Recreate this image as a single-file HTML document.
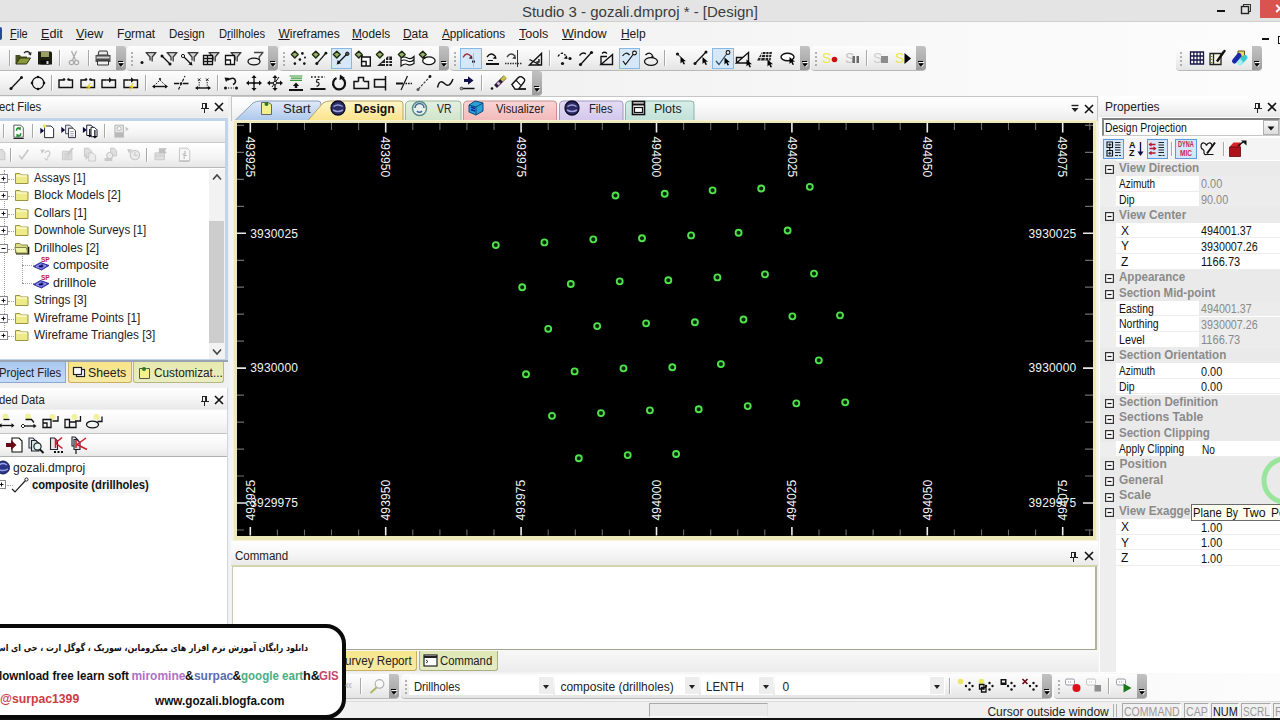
<!DOCTYPE html>
<html><head><meta charset="utf-8"><title>Studio 3 - gozali.dmproj * - [Design]</title>
<style>
html,body{margin:0;padding:0;}
body{width:1280px;height:720px;overflow:hidden;position:relative;background:#f3f3f3;font-family:"Liberation Sans","DejaVu Sans",sans-serif;}
.t{position:absolute;white-space:nowrap;transform-origin:0 50%;}
u{text-decoration:underline;text-underline-offset:1px;}
#blur{position:absolute;left:0;top:0;width:1280px;height:720px;overflow:hidden;}
</style></head><body><div id="blur">
<div style="position:absolute;left:0px;top:0px;width:1280px;height:21px;background:#e4e4e4;"></div>
<div style="position:absolute;left:0px;top:21px;width:1280px;height:1px;background:#d0d0d0;"></div>
<div style="position:absolute;left:0px;top:22px;width:1280px;height:74px;background:linear-gradient(90deg,#ebebeb 0%,#f1f1f1 40%,#f9f9f9 75%,#fcfcfc 100%);"></div>
<span class="t" style="left:521.9px;top:2.2px;font-size:15px;line-height:19px;color:#3c3c3c;">Studio 3 - gozali.dmproj * - [Design]</span>
<div style="position:absolute;left:1260px;top:0px;width:20px;height:18px;background:#d9534f;"></div>
<div style="position:absolute;left:1217px;top:10px;width:8px;height:2px;background:#111;"></div>
<svg style="position:absolute;left:1240px;top:3px;" width="12" height="12" viewBox="0 0 12 12"><rect x="3.5" y="1.5" width="7" height="7" fill="none" stroke="#333" stroke-width="1"/><rect x="1.5" y="3.5" width="7" height="7" fill="#e4e4e4" stroke="#222" stroke-width="1.4"/></svg>
<span class="t" style="left:1275.0px;top:-0.8px;font-size:16px;line-height:20px;color:#fff;font-weight:bold;">×</span>
<div style="position:absolute;left:1262px;top:38px;width:7px;height:2px;background:#111;"></div>
<div style="position:absolute;left:1278px;top:36px;width:4px;height:6px;border:1.5px solid #111;"></div>
<span class="t" style="left:9.9px;top:25.7px;font-size:12px;line-height:16px;color:#1a1a1a;transform:scaleX(0.915);"><u>F</u>ile</span>
<span class="t" style="left:40.9px;top:25.7px;font-size:12px;line-height:16px;color:#1a1a1a;transform:scaleX(1.050);"><u>E</u>dit</span>
<span class="t" style="left:76.4px;top:25.7px;font-size:12px;line-height:16px;color:#1a1a1a;transform:scaleX(1.054);"><u>V</u>iew</span>
<span class="t" style="left:117.4px;top:25.7px;font-size:12px;line-height:16px;color:#1a1a1a;transform:scaleX(1.005);">F<u>o</u>rmat</span>
<span class="t" style="left:169.4px;top:25.7px;font-size:12px;line-height:16px;color:#1a1a1a;transform:scaleX(0.956);">De<u>s</u>ign</span>
<span class="t" style="left:218.9px;top:25.7px;font-size:12px;line-height:16px;color:#1a1a1a;transform:scaleX(0.936);">D<u>r</u>illholes</span>
<span class="t" style="left:278.4px;top:25.7px;font-size:12px;line-height:16px;color:#1a1a1a;"><u>W</u>ireframes</span>
<span class="t" style="left:352.4px;top:25.7px;font-size:12px;line-height:16px;color:#1a1a1a;transform:scaleX(0.987);"><u>M</u>odels</span>
<span class="t" style="left:403.4px;top:25.7px;font-size:12px;line-height:16px;color:#1a1a1a;transform:scaleX(0.994);"><u>D</u>ata</span>
<span class="t" style="left:442.4px;top:25.7px;font-size:12px;line-height:16px;color:#1a1a1a;transform:scaleX(0.977);"><u>A</u>pplications</span>
<span class="t" style="left:519.4px;top:25.7px;font-size:12px;line-height:16px;color:#1a1a1a;transform:scaleX(1.042);"><u>T</u>ools</span>
<span class="t" style="left:562.4px;top:25.7px;font-size:12px;line-height:16px;color:#1a1a1a;transform:scaleX(1.047);"><u>W</u>indow</span>
<span class="t" style="left:620.9px;top:25.7px;font-size:12px;line-height:16px;color:#1a1a1a;"><u>H</u>elp</span>
<div style="position:absolute;left:0px;top:27px;width:2px;height:13px;background:#2a4a98;border-radius:0 5px 5px 0;"></div>
<div style="position:absolute;left:-4px;top:46px;width:130px;height:24px;background:linear-gradient(180deg,#fdfdfd 0%,#f4f4f4 45%,#e4e4e4 100%);border-radius:4px;box-shadow:0 1px 0 #b8b8b8;"></div>
<div style="position:absolute;left:116px;top:46px;width:10px;height:24px;background:linear-gradient(180deg,#c2c2c2 0%,#b0b0b0 50%,#9c9c9c 100%);border-radius:0 3px 3px 0;"></div>
<div style="position:absolute;left:118px;top:61px;width:5px;height:1px;background:#000;box-shadow:1px 1px 0 #fff;"></div>
<svg style="position:absolute;left:117px;top:63px;" width="8" height="5" viewBox="0 0 8 5"><path d="M1.5 0.5 L6.5 0.5 L4 3.5 Z" fill="#000"/><path d="M2.5 1.5 L7.5 1.5 L5 4.5 Z" fill="#fff" opacity="0.6"/><path d="M1.5 0.5 L6.5 0.5 L4 3.5 Z" fill="#000"/></svg>
<div style="position:absolute;left:9px;top:50px;width:1px;height:16px;background:#a8a8a8;box-shadow:1px 0 0 #fff;"></div>
<div style="position:absolute;left:59px;top:50px;width:1px;height:16px;background:#a8a8a8;box-shadow:1px 0 0 #fff;"></div>
<div style="position:absolute;left:88px;top:50px;width:1px;height:16px;background:#a8a8a8;box-shadow:1px 0 0 #fff;"></div>
<div style="position:absolute;left:127px;top:46px;width:151px;height:24px;background:linear-gradient(180deg,#fdfdfd 0%,#f4f4f4 45%,#e4e4e4 100%);border-radius:4px;box-shadow:0 1px 0 #b8b8b8;"></div>
<div style="position:absolute;left:268px;top:46px;width:10px;height:24px;background:linear-gradient(180deg,#c2c2c2 0%,#b0b0b0 50%,#9c9c9c 100%);border-radius:0 3px 3px 0;"></div>
<div style="position:absolute;left:270px;top:61px;width:5px;height:1px;background:#000;box-shadow:1px 1px 0 #fff;"></div>
<svg style="position:absolute;left:269px;top:63px;" width="8" height="5" viewBox="0 0 8 5"><path d="M1.5 0.5 L6.5 0.5 L4 3.5 Z" fill="#000"/><path d="M2.5 1.5 L7.5 1.5 L5 4.5 Z" fill="#fff" opacity="0.6"/><path d="M1.5 0.5 L6.5 0.5 L4 3.5 Z" fill="#000"/></svg>
<div style="position:absolute;left:131px;top:52px;width:2px;height:2px;background:#9a9a9a;border-radius:1px;"></div>
<div style="position:absolute;left:131px;top:56px;width:2px;height:2px;background:#9a9a9a;border-radius:1px;"></div>
<div style="position:absolute;left:131px;top:60px;width:2px;height:2px;background:#9a9a9a;border-radius:1px;"></div>
<div style="position:absolute;left:131px;top:64px;width:2px;height:2px;background:#9a9a9a;border-radius:1px;"></div>
<div style="position:absolute;left:279px;top:46px;width:170px;height:24px;background:linear-gradient(180deg,#fdfdfd 0%,#f4f4f4 45%,#e4e4e4 100%);border-radius:4px;box-shadow:0 1px 0 #b8b8b8;"></div>
<div style="position:absolute;left:439px;top:46px;width:10px;height:24px;background:linear-gradient(180deg,#c2c2c2 0%,#b0b0b0 50%,#9c9c9c 100%);border-radius:0 3px 3px 0;"></div>
<div style="position:absolute;left:441px;top:61px;width:5px;height:1px;background:#000;box-shadow:1px 1px 0 #fff;"></div>
<svg style="position:absolute;left:440px;top:63px;" width="8" height="5" viewBox="0 0 8 5"><path d="M1.5 0.5 L6.5 0.5 L4 3.5 Z" fill="#000"/><path d="M2.5 1.5 L7.5 1.5 L5 4.5 Z" fill="#fff" opacity="0.6"/><path d="M1.5 0.5 L6.5 0.5 L4 3.5 Z" fill="#000"/></svg>
<div style="position:absolute;left:283px;top:52px;width:2px;height:2px;background:#9a9a9a;border-radius:1px;"></div>
<div style="position:absolute;left:283px;top:56px;width:2px;height:2px;background:#9a9a9a;border-radius:1px;"></div>
<div style="position:absolute;left:283px;top:60px;width:2px;height:2px;background:#9a9a9a;border-radius:1px;"></div>
<div style="position:absolute;left:283px;top:64px;width:2px;height:2px;background:#9a9a9a;border-radius:1px;"></div>
<div style="position:absolute;left:331px;top:48px;width:19px;height:18.5px;background:#d6e8f8;border:1px solid #86b8e6;"></div>
<div style="position:absolute;left:450px;top:46px;width:360px;height:24px;background:linear-gradient(180deg,#fdfdfd 0%,#f4f4f4 45%,#e4e4e4 100%);border-radius:4px;box-shadow:0 1px 0 #b8b8b8;"></div>
<div style="position:absolute;left:800px;top:46px;width:10px;height:24px;background:linear-gradient(180deg,#c2c2c2 0%,#b0b0b0 50%,#9c9c9c 100%);border-radius:0 3px 3px 0;"></div>
<div style="position:absolute;left:802px;top:61px;width:5px;height:1px;background:#000;box-shadow:1px 1px 0 #fff;"></div>
<svg style="position:absolute;left:801px;top:63px;" width="8" height="5" viewBox="0 0 8 5"><path d="M1.5 0.5 L6.5 0.5 L4 3.5 Z" fill="#000"/><path d="M2.5 1.5 L7.5 1.5 L5 4.5 Z" fill="#fff" opacity="0.6"/><path d="M1.5 0.5 L6.5 0.5 L4 3.5 Z" fill="#000"/></svg>
<div style="position:absolute;left:454px;top:52px;width:2px;height:2px;background:#9a9a9a;border-radius:1px;"></div>
<div style="position:absolute;left:454px;top:56px;width:2px;height:2px;background:#9a9a9a;border-radius:1px;"></div>
<div style="position:absolute;left:454px;top:60px;width:2px;height:2px;background:#9a9a9a;border-radius:1px;"></div>
<div style="position:absolute;left:454px;top:64px;width:2px;height:2px;background:#9a9a9a;border-radius:1px;"></div>
<div style="position:absolute;left:460px;top:48px;width:19.5px;height:18.5px;background:#d6e8f8;border:1px solid #86b8e6;"></div>
<div style="position:absolute;left:549px;top:50px;width:1px;height:16px;background:#a8a8a8;box-shadow:1px 0 0 #fff;"></div>
<div style="position:absolute;left:664px;top:50px;width:1px;height:16px;background:#a8a8a8;box-shadow:1px 0 0 #fff;"></div>
<div style="position:absolute;left:618.5px;top:48px;width:19.0px;height:18.5px;background:#d6e8f8;border:1px solid #86b8e6;"></div>
<div style="position:absolute;left:712px;top:48px;width:19.5px;height:18.5px;background:#d6e8f8;border:1px solid #86b8e6;"></div>
<div style="position:absolute;left:811px;top:46px;width:115px;height:24px;background:linear-gradient(180deg,#fdfdfd 0%,#f4f4f4 45%,#e4e4e4 100%);border-radius:4px;box-shadow:0 1px 0 #b8b8b8;"></div>
<div style="position:absolute;left:916px;top:46px;width:10px;height:24px;background:linear-gradient(180deg,#c2c2c2 0%,#b0b0b0 50%,#9c9c9c 100%);border-radius:0 3px 3px 0;"></div>
<div style="position:absolute;left:918px;top:61px;width:5px;height:1px;background:#000;box-shadow:1px 1px 0 #fff;"></div>
<svg style="position:absolute;left:917px;top:63px;" width="8" height="5" viewBox="0 0 8 5"><path d="M1.5 0.5 L6.5 0.5 L4 3.5 Z" fill="#000"/><path d="M2.5 1.5 L7.5 1.5 L5 4.5 Z" fill="#fff" opacity="0.6"/><path d="M1.5 0.5 L6.5 0.5 L4 3.5 Z" fill="#000"/></svg>
<div style="position:absolute;left:815px;top:52px;width:2px;height:2px;background:#9a9a9a;border-radius:1px;"></div>
<div style="position:absolute;left:815px;top:56px;width:2px;height:2px;background:#9a9a9a;border-radius:1px;"></div>
<div style="position:absolute;left:815px;top:60px;width:2px;height:2px;background:#9a9a9a;border-radius:1px;"></div>
<div style="position:absolute;left:815px;top:64px;width:2px;height:2px;background:#9a9a9a;border-radius:1px;"></div>
<div style="position:absolute;left:866px;top:50px;width:1px;height:16px;background:#a8a8a8;box-shadow:1px 0 0 #fff;"></div>
<div style="position:absolute;left:1176px;top:46px;width:86px;height:24px;background:linear-gradient(180deg,#fdfdfd 0%,#f4f4f4 45%,#e4e4e4 100%);border-radius:4px;box-shadow:0 1px 0 #b8b8b8;"></div>
<div style="position:absolute;left:1252px;top:46px;width:10px;height:24px;background:linear-gradient(180deg,#c2c2c2 0%,#b0b0b0 50%,#9c9c9c 100%);border-radius:0 3px 3px 0;"></div>
<div style="position:absolute;left:1254px;top:61px;width:5px;height:1px;background:#000;box-shadow:1px 1px 0 #fff;"></div>
<svg style="position:absolute;left:1253px;top:63px;" width="8" height="5" viewBox="0 0 8 5"><path d="M1.5 0.5 L6.5 0.5 L4 3.5 Z" fill="#000"/><path d="M2.5 1.5 L7.5 1.5 L5 4.5 Z" fill="#fff" opacity="0.6"/><path d="M1.5 0.5 L6.5 0.5 L4 3.5 Z" fill="#000"/></svg>
<div style="position:absolute;left:1180px;top:52px;width:2px;height:2px;background:#9a9a9a;border-radius:1px;"></div>
<div style="position:absolute;left:1180px;top:56px;width:2px;height:2px;background:#9a9a9a;border-radius:1px;"></div>
<div style="position:absolute;left:1180px;top:60px;width:2px;height:2px;background:#9a9a9a;border-radius:1px;"></div>
<div style="position:absolute;left:1180px;top:64px;width:2px;height:2px;background:#9a9a9a;border-radius:1px;"></div>
<div style="position:absolute;left:-4px;top:71px;width:546px;height:24px;background:linear-gradient(180deg,#fdfdfd 0%,#f4f4f4 45%,#e4e4e4 100%);border-radius:4px;box-shadow:0 1px 0 #b8b8b8;"></div>
<div style="position:absolute;left:532px;top:71px;width:10px;height:24px;background:linear-gradient(180deg,#c2c2c2 0%,#b0b0b0 50%,#9c9c9c 100%);border-radius:0 3px 3px 0;"></div>
<div style="position:absolute;left:534px;top:86px;width:5px;height:1px;background:#000;box-shadow:1px 1px 0 #fff;"></div>
<svg style="position:absolute;left:533px;top:88px;" width="8" height="5" viewBox="0 0 8 5"><path d="M1.5 0.5 L6.5 0.5 L4 3.5 Z" fill="#000"/><path d="M2.5 1.5 L7.5 1.5 L5 4.5 Z" fill="#fff" opacity="0.6"/><path d="M1.5 0.5 L6.5 0.5 L4 3.5 Z" fill="#000"/></svg>
<div style="position:absolute;left:51px;top:75px;width:1px;height:16px;background:#a8a8a8;box-shadow:1px 0 0 #fff;"></div>
<div style="position:absolute;left:145px;top:75px;width:1px;height:16px;background:#a8a8a8;box-shadow:1px 0 0 #fff;"></div>
<div style="position:absolute;left:217px;top:75px;width:1px;height:16px;background:#a8a8a8;box-shadow:1px 0 0 #fff;"></div>
<div style="position:absolute;left:481px;top:75px;width:1px;height:16px;background:#a8a8a8;box-shadow:1px 0 0 #fff;"></div>
<div style="position:absolute;left:0px;top:96px;width:229px;height:560px;background:#f0f0f0;"></div>
<div style="position:absolute;left:0px;top:97px;width:228px;height:20px;background:linear-gradient(180deg,#ffffff 0%,#f6f6f6 50%,#e9e9e9 100%);"></div>
<span class="t" style="left:-0.6px;top:99.2px;font-size:12px;line-height:16px;color:#222;transform:scaleX(0.945);">ect Files</span>
<svg style="position:absolute;left:200px;top:102px;" width="10" height="11" viewBox="0 0 10 11"><path d="M2 1.5 h5 M2.5 1 v5 M5.5 1 v5 M6.5 1 v5 M0.5 6.5 h8 M4.5 7 v3.5" stroke="#222" stroke-width="1" fill="none" shape-rendering="crispEdges"/></svg>
<svg style="position:absolute;left:214px;top:102px;" width="10" height="10" viewBox="0 0 10 10"><path d="M1 1 L9 9 M9 1 L1 9" stroke="#111" stroke-width="1.6" fill="none"/></svg>
<div style="position:absolute;left:0px;top:118px;width:228px;height:242px;background:#fff;border:1px solid #c2d4ea;border-left:none;border-width:3px 3px 1px 0;box-sizing:border-box;"></div>
<div style="position:absolute;left:0px;top:121px;width:225px;height:21px;background:linear-gradient(180deg,#ffffff,#f4f4f4 60%,#e6e6e6);"></div>
<div style="position:absolute;left:0px;top:142px;width:225px;height:1px;background:#c8c8c8;"></div>
<div style="position:absolute;left:0px;top:144px;width:225px;height:23px;background:linear-gradient(180deg,#ffffff,#f4f4f4 60%,#e6e6e6);"></div>
<div style="position:absolute;left:0px;top:167px;width:225px;height:1px;background:#b8b8b8;"></div>
<div style="position:absolute;left:3px;top:124px;width:1px;height:14px;background:#a8a8a8;box-shadow:1px 0 0 #fff;"></div>
<div style="position:absolute;left:32px;top:124px;width:1px;height:14px;background:#a8a8a8;box-shadow:1px 0 0 #fff;"></div>
<div style="position:absolute;left:104px;top:124px;width:1px;height:14px;background:#a8a8a8;box-shadow:1px 0 0 #fff;"></div>
<div style="position:absolute;left:10px;top:148px;width:1px;height:14px;background:#a8a8a8;box-shadow:1px 0 0 #fff;"></div>
<div style="position:absolute;left:146px;top:148px;width:1px;height:14px;background:#a8a8a8;box-shadow:1px 0 0 #fff;"></div>
<div style="position:absolute;left:4px;top:170px;width:0px;height:170px;border-left:1px dotted #a0a0a0;"></div>
<div style="position:absolute;left:22px;top:256px;width:0px;height:27px;border-left:1px dotted #a0a0a0;"></div>
<div style="position:absolute;left:8px;top:178.5px;width:8px;height:0px;border-top:1px dotted #a0a0a0;"></div>
<svg style="position:absolute;left:-1px;top:173.5px;" width="9" height="9" viewBox="0 0 9 9"><rect x="0.5" y="0.5" width="8" height="8" fill="#fff" stroke="#8a8a8a"/><path d="M2.5 4.5 h4 M4.5 2.5 v4" stroke="#111" stroke-width="1"/></svg>
<svg style="position:absolute;left:14px;top:170.5px;" width="16" height="14" viewBox="0 0 16 14"><path d="M1.5 2.5 h4.5 l1.5 1.5 h6.5 v8.5 h-12.5 z" fill="#eeea88" stroke="#9a9648" stroke-width="1"/><path d="M2.5 5 h10.5" stroke="#fbf9c8" stroke-width="1.5"/></svg>
<span class="t" style="left:34.4px;top:169.7px;font-size:12px;line-height:16px;color:#222;transform:scaleX(0.934);">Assays [1]</span>
<div style="position:absolute;left:8px;top:196px;width:8px;height:0px;border-top:1px dotted #a0a0a0;"></div>
<svg style="position:absolute;left:-1px;top:191px;" width="9" height="9" viewBox="0 0 9 9"><rect x="0.5" y="0.5" width="8" height="8" fill="#fff" stroke="#8a8a8a"/><path d="M2.5 4.5 h4 M4.5 2.5 v4" stroke="#111" stroke-width="1"/></svg>
<svg style="position:absolute;left:14px;top:188px;" width="16" height="14" viewBox="0 0 16 14"><path d="M1.5 2.5 h4.5 l1.5 1.5 h6.5 v8.5 h-12.5 z" fill="#eeea88" stroke="#9a9648" stroke-width="1"/><path d="M2.5 5 h10.5" stroke="#fbf9c8" stroke-width="1.5"/></svg>
<span class="t" style="left:34.4px;top:187.2px;font-size:12px;line-height:16px;color:#222;transform:scaleX(0.985);">Block Models [2]</span>
<div style="position:absolute;left:8px;top:213.5px;width:8px;height:0px;border-top:1px dotted #a0a0a0;"></div>
<svg style="position:absolute;left:-1px;top:208.5px;" width="9" height="9" viewBox="0 0 9 9"><rect x="0.5" y="0.5" width="8" height="8" fill="#fff" stroke="#8a8a8a"/><path d="M2.5 4.5 h4 M4.5 2.5 v4" stroke="#111" stroke-width="1"/></svg>
<svg style="position:absolute;left:14px;top:205.5px;" width="16" height="14" viewBox="0 0 16 14"><path d="M1.5 2.5 h4.5 l1.5 1.5 h6.5 v8.5 h-12.5 z" fill="#eeea88" stroke="#9a9648" stroke-width="1"/><path d="M2.5 5 h10.5" stroke="#fbf9c8" stroke-width="1.5"/></svg>
<span class="t" style="left:34.4px;top:204.7px;font-size:12px;line-height:16px;color:#222;transform:scaleX(0.976);">Collars [1]</span>
<div style="position:absolute;left:8px;top:231px;width:8px;height:0px;border-top:1px dotted #a0a0a0;"></div>
<svg style="position:absolute;left:-1px;top:226px;" width="9" height="9" viewBox="0 0 9 9"><rect x="0.5" y="0.5" width="8" height="8" fill="#fff" stroke="#8a8a8a"/><path d="M2.5 4.5 h4 M4.5 2.5 v4" stroke="#111" stroke-width="1"/></svg>
<svg style="position:absolute;left:14px;top:223px;" width="16" height="14" viewBox="0 0 16 14"><path d="M1.5 2.5 h4.5 l1.5 1.5 h6.5 v8.5 h-12.5 z" fill="#eeea88" stroke="#9a9648" stroke-width="1"/><path d="M2.5 5 h10.5" stroke="#fbf9c8" stroke-width="1.5"/></svg>
<span class="t" style="left:34.4px;top:222.2px;font-size:12px;line-height:16px;color:#222;transform:scaleX(0.961);">Downhole Surveys [1]</span>
<div style="position:absolute;left:8px;top:248.5px;width:8px;height:0px;border-top:1px dotted #a0a0a0;"></div>
<svg style="position:absolute;left:-1px;top:243.5px;" width="9" height="9" viewBox="0 0 9 9"><rect x="0.5" y="0.5" width="8" height="8" fill="#fff" stroke="#8a8a8a"/><path d="M2.5 4.5 h4" stroke="#111" stroke-width="1"/></svg>
<svg style="position:absolute;left:14px;top:240.5px;" width="17" height="14" viewBox="0 0 17 14"><path d="M2 12.8 h12.5 v-7" stroke="#1a1a10" stroke-width="1.6" fill="none"/><path d="M1.5 2.5 h4.5 l1.5 1.5 h6 v8 h-12 z" fill="#dcdc84" stroke="#8a8a48" stroke-width="1"/><path d="M0.8 6.5 h11.5 l1.5 5.5 h-11.5 z" fill="#eef2a4" stroke="#7a7a40" stroke-width="0.9"/></svg>
<span class="t" style="left:34.4px;top:239.7px;font-size:12px;line-height:16px;color:#222;transform:scaleX(0.987);">Drillholes [2]</span>
<div style="position:absolute;left:22px;top:265px;width:12px;height:0px;border-top:1px dotted #a0a0a0;"></div>
<svg style="position:absolute;left:33px;top:257px;" width="17" height="15" viewBox="0 0 17 15"><path d="M0.5 9.5 L7.5 5.5 L16 8.5 L8.5 13 Z" fill="#4a4ad0" stroke="#24248a" stroke-width="0.9"/><path d="M3 9.6 L7.8 7 L13 8.8 L8.3 11.4 Z" fill="none" stroke="#b4b4f4" stroke-width="0.8"/><path d="M6 9.5 h3 v-2" stroke="#0c0c50" stroke-width="1.4" fill="none"/><text x="8" y="5.2" font-family="Liberation Sans,sans-serif" font-size="6.5" font-weight="bold" fill="#c01830">SP</text></svg>
<span class="t" style="left:52.9px;top:257.2px;font-size:12px;line-height:16px;color:#222;transform:scaleX(1.019);">composite</span>
<div style="position:absolute;left:22px;top:282.5px;width:12px;height:0px;border-top:1px dotted #a0a0a0;"></div>
<svg style="position:absolute;left:33px;top:274.5px;" width="17" height="15" viewBox="0 0 17 15"><path d="M0.5 9.5 L7.5 5.5 L16 8.5 L8.5 13 Z" fill="#4a4ad0" stroke="#24248a" stroke-width="0.9"/><path d="M3 9.6 L7.8 7 L13 8.8 L8.3 11.4 Z" fill="none" stroke="#b4b4f4" stroke-width="0.8"/><path d="M6 9.5 h3 v-2" stroke="#0c0c50" stroke-width="1.4" fill="none"/><text x="8" y="5.2" font-family="Liberation Sans,sans-serif" font-size="6.5" font-weight="bold" fill="#c01830">SP</text></svg>
<span class="t" style="left:52.9px;top:274.7px;font-size:12px;line-height:16px;color:#222;transform:scaleX(1.044);">drillhole</span>
<div style="position:absolute;left:8px;top:301px;width:8px;height:0px;border-top:1px dotted #a0a0a0;"></div>
<svg style="position:absolute;left:-1px;top:296px;" width="9" height="9" viewBox="0 0 9 9"><rect x="0.5" y="0.5" width="8" height="8" fill="#fff" stroke="#8a8a8a"/><path d="M2.5 4.5 h4 M4.5 2.5 v4" stroke="#111" stroke-width="1"/></svg>
<svg style="position:absolute;left:14px;top:293px;" width="16" height="14" viewBox="0 0 16 14"><path d="M1.5 2.5 h4.5 l1.5 1.5 h6.5 v8.5 h-12.5 z" fill="#eeea88" stroke="#9a9648" stroke-width="1"/><path d="M2.5 5 h10.5" stroke="#fbf9c8" stroke-width="1.5"/></svg>
<span class="t" style="left:34.4px;top:292.2px;font-size:12px;line-height:16px;color:#222;transform:scaleX(0.976);">Strings [3]</span>
<div style="position:absolute;left:8px;top:318.5px;width:8px;height:0px;border-top:1px dotted #a0a0a0;"></div>
<svg style="position:absolute;left:-1px;top:313.5px;" width="9" height="9" viewBox="0 0 9 9"><rect x="0.5" y="0.5" width="8" height="8" fill="#fff" stroke="#8a8a8a"/><path d="M2.5 4.5 h4 M4.5 2.5 v4" stroke="#111" stroke-width="1"/></svg>
<svg style="position:absolute;left:14px;top:310.5px;" width="16" height="14" viewBox="0 0 16 14"><path d="M1.5 2.5 h4.5 l1.5 1.5 h6.5 v8.5 h-12.5 z" fill="#eeea88" stroke="#9a9648" stroke-width="1"/><path d="M2.5 5 h10.5" stroke="#fbf9c8" stroke-width="1.5"/></svg>
<span class="t" style="left:34.4px;top:309.7px;font-size:12px;line-height:16px;color:#222;transform:scaleX(0.977);">Wireframe Points [1]</span>
<div style="position:absolute;left:8px;top:336px;width:8px;height:0px;border-top:1px dotted #a0a0a0;"></div>
<svg style="position:absolute;left:-1px;top:331px;" width="9" height="9" viewBox="0 0 9 9"><rect x="0.5" y="0.5" width="8" height="8" fill="#fff" stroke="#8a8a8a"/><path d="M2.5 4.5 h4 M4.5 2.5 v4" stroke="#111" stroke-width="1"/></svg>
<svg style="position:absolute;left:14px;top:328px;" width="16" height="14" viewBox="0 0 16 14"><path d="M1.5 2.5 h4.5 l1.5 1.5 h6.5 v8.5 h-12.5 z" fill="#eeea88" stroke="#9a9648" stroke-width="1"/><path d="M2.5 5 h10.5" stroke="#fbf9c8" stroke-width="1.5"/></svg>
<span class="t" style="left:34.4px;top:327.2px;font-size:12px;line-height:16px;color:#222;transform:scaleX(0.977);">Wireframe Triangles [3]</span>
<div style="position:absolute;left:209px;top:169px;width:16px;height:190px;background:#f2f2f2;"></div>
<div style="position:absolute;left:209px;top:221px;width:15px;height:122px;background:#cdcdcd;"></div>
<svg style="position:absolute;left:212px;top:173px;" width="10" height="8" viewBox="0 0 10 8"><path d="M1 6.5 L5 2 L9 6.5" stroke="#444" stroke-width="1.6" fill="none"/></svg>
<svg style="position:absolute;left:212px;top:348px;" width="10" height="8" viewBox="0 0 10 8"><path d="M1 1.5 L5 6 L9 1.5" stroke="#444" stroke-width="1.6" fill="none"/></svg>
<div style="position:absolute;left:0px;top:360px;width:228px;height:2px;background:#9aa4b4;"></div>
<div style="position:absolute;left:0px;top:362px;width:66px;height:21px;background:linear-gradient(180deg,#a9c8ee,#c4dafa);border:1px solid #8aa8d0;border-top:none;border-left:none;box-sizing:border-box;"></div>
<div style="position:absolute;left:67.5px;top:362px;width:64px;height:21px;background:linear-gradient(180deg,#f8e488,#f6e9a2);border:1px solid #c8b060;border-top:none;border-radius:0 0 3px 3px;box-sizing:border-box;"></div>
<div style="position:absolute;left:133px;top:362px;width:90.5px;height:21px;background:linear-gradient(180deg,#e6eaae,#e9edc0);border:1px solid #b4b880;border-top:none;border-radius:0 0 3px 3px;box-sizing:border-box;"></div>
<span class="t" style="left:-0.6px;top:365.2px;font-size:12px;line-height:16px;color:#222;transform:scaleX(0.942);">Project Files</span>
<svg style="position:absolute;left:72px;top:366px;" width="14" height="13" viewBox="0 0 14 13"><rect x="4.5" y="3.5" width="8" height="7" fill="#fff" stroke="#222" stroke-width="1.2"/><rect x="1.5" y="1.5" width="8" height="7" fill="#fff" stroke="#222" stroke-width="1.2"/></svg>
<span class="t" style="left:88.4px;top:365.2px;font-size:12px;line-height:16px;color:#222;transform:scaleX(1.023);">Sheets</span>
<svg style="position:absolute;left:138px;top:365px;" width="13" height="15" viewBox="0 0 13 15"><path d="M1.5 3.5 h7 l3 0 v10 h-10 z" fill="#f4f08a" stroke="#555" stroke-width="1"/><circle cx="6" cy="4" r="2" fill="#2a7a2a"/></svg>
<span class="t" style="left:153.9px;top:365.2px;font-size:12px;line-height:16px;color:#222;transform:scaleX(0.981);">Customizat...</span>
<div style="position:absolute;left:0px;top:388px;width:228px;height:21px;background:linear-gradient(180deg,#ffffff 0%,#f6f6f6 50%,#e9e9e9 100%);"></div>
<span class="t" style="left:-0.6px;top:391.7px;font-size:12px;line-height:16px;color:#222;transform:scaleX(0.939);">ded Data</span>
<svg style="position:absolute;left:200px;top:395px;" width="10" height="11" viewBox="0 0 10 11"><path d="M2 1.5 h5 M2.5 1 v5 M5.5 1 v5 M6.5 1 v5 M0.5 6.5 h8 M4.5 7 v3.5" stroke="#222" stroke-width="1" fill="none" shape-rendering="crispEdges"/></svg>
<svg style="position:absolute;left:214px;top:394.5px;" width="10" height="10" viewBox="0 0 10 10"><path d="M1 1 L9 9 M9 1 L1 9" stroke="#111" stroke-width="1.6" fill="none"/></svg>
<div style="position:absolute;left:0px;top:410px;width:228px;height:23px;background:linear-gradient(180deg,#ffffff,#f6f6f6 60%,#ebebeb);"></div>
<div style="position:absolute;left:0px;top:433px;width:228px;height:1px;background:#c4c4c4;"></div>
<div style="position:absolute;left:0px;top:434px;width:228px;height:22px;background:linear-gradient(180deg,#ffffff,#f6f6f6 60%,#e8e8e8);"></div>
<div style="position:absolute;left:0px;top:456px;width:228px;height:1px;background:#b0b0b0;"></div>
<div style="position:absolute;left:0px;top:457px;width:228px;height:167px;background:#fff;"></div>
<div style="position:absolute;left:227px;top:388px;width:1px;height:236px;background:#ccd6e4;"></div>
<span class="t" style="left:13.4px;top:459.7px;font-size:12px;line-height:16px;color:#222;transform:scaleX(1.012);">gozali.dmproj</span>
<svg style="position:absolute;left:-4px;top:460px;" width="15" height="15" viewBox="0 0 15 15"><circle cx="7" cy="7.5" r="6.5" fill="#2c3488" stroke="#141850"/><path d="M3 5 q4 -3 8 0 M2 9 q5 3 10 0" stroke="#98a4e8" stroke-width="1.4" fill="none"/></svg>
<svg style="position:absolute;left:-3px;top:480px;" width="9" height="9" viewBox="0 0 9 9"><rect x="0.5" y="0.5" width="8" height="8" fill="#fff" stroke="#8a8a8a"/><path d="M2.5 4.5 h4 M4.5 2.5 v4" stroke="#111" stroke-width="1"/></svg>
<div style="position:absolute;left:7px;top:485px;width:6px;height:0px;border-top:1px dotted #a0a0a0;"></div>
<svg style="position:absolute;left:10px;top:476px;" width="20" height="18" viewBox="0 0 20 18"><path d="M2 13 L5 16 L15.5 4.5" stroke="#222" stroke-width="1.2" fill="none"/><circle cx="16.5" cy="3.5" r="1.6" fill="#fff" stroke="#222" stroke-width="1"/></svg>
<div style="position:absolute;left:30px;top:477px;width:120px;height:16px;background:#f4f4f4;"></div>
<span class="t" style="left:31.9px;top:477.2px;font-size:12px;line-height:16px;color:#111;font-weight:bold;transform:scaleX(0.936);">composite (drillholes)</span>
<div style="position:absolute;left:231px;top:96px;width:867px;height:25px;background:linear-gradient(180deg,#ffffff,#f7f7f7 55%,#ebebeb);border:1px solid #c6c6c6;border-bottom:none;box-sizing:border-box;"></div>
<svg style="position:absolute;left:232px;top:99.5px;" width="91" height="21.5" viewBox="0 0 91 21.5"><defs><linearGradient id="g234" x1="0" y1="0" x2="0" y2="1"><stop offset="0" stop-color="#dfeaf8"/><stop offset="1" stop-color="#aac6ec"/></linearGradient></defs><path d="M2 21.5 L21 3 Q24 1 28 1 L86 1 Q89 1 89 4 L89 21.5 Z" fill="url(#g234)" stroke="#8a9cb8" stroke-width="1"/></svg>
<svg style="position:absolute;left:403px;top:99.5px;" width="60" height="21.5" viewBox="0 0 60 21.5"><defs><linearGradient id="g405" x1="0" y1="0" x2="0" y2="1"><stop offset="0" stop-color="#e4f0e0"/><stop offset="1" stop-color="#cfe4ca"/></linearGradient></defs><path d="M2.5 21.5 L2.5 5 Q2.5 1 7 1 L55 1 Q58 1 58 4 L58 21.5 Z" fill="url(#g405)" stroke="#9ab89a" stroke-width="1"/></svg>
<svg style="position:absolute;left:461px;top:99.5px;" width="97.5" height="21.5" viewBox="0 0 97.5 21.5"><defs><linearGradient id="g463" x1="0" y1="0" x2="0" y2="1"><stop offset="0" stop-color="#f8d4d4"/><stop offset="1" stop-color="#f2b8b8"/></linearGradient></defs><path d="M2.5 21.5 L2.5 5 Q2.5 1 7 1 L92.5 1 Q95.5 1 95.5 4 L95.5 21.5 Z" fill="url(#g463)" stroke="#c89090" stroke-width="1"/></svg>
<svg style="position:absolute;left:556.5px;top:99.5px;" width="68.0" height="21.5" viewBox="0 0 68.0 21.5"><defs><linearGradient id="g558" x1="0" y1="0" x2="0" y2="1"><stop offset="0" stop-color="#e4dcf4"/><stop offset="1" stop-color="#d2c6ec"/></linearGradient></defs><path d="M2.5 21.5 L2.5 5 Q2.5 1 7 1 L63.0 1 Q66.0 1 66.0 4 L66.0 21.5 Z" fill="url(#g558)" stroke="#a498c4" stroke-width="1"/></svg>
<svg style="position:absolute;left:622.5px;top:99.5px;" width="73.0" height="21.5" viewBox="0 0 73.0 21.5"><defs><linearGradient id="g624" x1="0" y1="0" x2="0" y2="1"><stop offset="0" stop-color="#d8eee8"/><stop offset="1" stop-color="#c0e0d6"/></linearGradient></defs><path d="M2.5 21.5 L2.5 5 Q2.5 1 7 1 L68.0 1 Q71.0 1 71.0 4 L71.0 21.5 Z" fill="url(#g624)" stroke="#8ab4a8" stroke-width="1"/></svg>
<svg style="position:absolute;left:305px;top:99.5px;" width="100" height="21.5" viewBox="0 0 100 21.5"><defs><linearGradient id="g307" x1="0" y1="0" x2="0" y2="1"><stop offset="0" stop-color="#fff6c8"/><stop offset="1" stop-color="#fae288"/></linearGradient></defs><path d="M2 21.5 L18 3 Q21 1 25 1 L95 1 Q98 1 98 4 L98 21.5 Z" fill="url(#g307)" stroke="#b8a468" stroke-width="1"/></svg>
<span class="t" style="left:283.4px;top:100.7px;font-size:12px;line-height:16px;color:#222;transform:scaleX(1.094);">Start</span>
<span class="t" style="left:353.9px;top:100.7px;font-size:12px;line-height:16px;color:#111;font-weight:bold;transform:scaleX(1.018);">Design</span>
<span class="t" style="left:436.5px;top:100.7px;font-size:12px;line-height:16px;color:#222;transform:scaleX(0.870);">VR</span>
<span class="t" style="left:495.9px;top:100.7px;font-size:12px;line-height:16px;color:#222;transform:scaleX(0.930);">Visualizer</span>
<span class="t" style="left:588.9px;top:100.7px;font-size:12px;line-height:16px;color:#222;transform:scaleX(0.935);">Files</span>
<span class="t" style="left:654.4px;top:100.7px;font-size:12px;line-height:16px;color:#222;transform:scaleX(1.039);">Plots</span>
<svg style="position:absolute;left:260px;top:100px;" width="13" height="16" viewBox="0 0 13 16"><path d="M1.5 2.5 h7 l3 2 v10 h-10 z" fill="#f4f08a" stroke="#666" stroke-width="1"/><circle cx="6.5" cy="4" r="2" fill="#2a7a2a"/></svg>
<svg style="position:absolute;left:330px;top:100px;" width="16" height="16" viewBox="0 0 16 16"><circle cx="8" cy="8" r="7" fill="#2c2c68" stroke="#0c0c28" stroke-width="1.3"/><path d="M3.5 6.5 q4.5 -3 9 0 M3 10 q5 3 10 0" stroke="#98a0dc" stroke-width="1.5" fill="none"/></svg>
<svg style="position:absolute;left:411px;top:100px;" width="17" height="17" viewBox="0 0 17 17"><circle cx="8.5" cy="8.5" r="7" fill="#e8f0e8" stroke="#5a8a8a" stroke-width="1.5"/><path d="M4 8 a4.5 4.5 0 0 1 9 0 M6 11 a3 3 0 0 0 5 0" stroke="#3a6a9a" stroke-width="1.5" fill="none"/></svg>
<svg style="position:absolute;left:467px;top:99px;" width="18" height="18" viewBox="0 0 18 18"><path d="M2 6 L8 2 L16 4 L16 12 L9 16 L2 13 Z" fill="#28a0d8" stroke="#104878" stroke-width="1"/><path d="M2 6 L9 8 L16 4 M9 8 L9 16" stroke="#104878" stroke-width="1" fill="none"/><path d="M4 8 L8 9.5 M4 10.5 L8 12" stroke="#1028a0" stroke-width="1.5"/></svg>
<svg style="position:absolute;left:564px;top:100px;" width="16" height="16" viewBox="0 0 16 16"><circle cx="8" cy="8" r="7" fill="#2c2a64" stroke="#0c0c28" stroke-width="1.3"/><path d="M3.5 6.5 q4.5 -3 9 0 M3 10 q5 3 10 0" stroke="#a8a4e0" stroke-width="1.5" fill="none"/></svg>
<svg style="position:absolute;left:631px;top:100px;" width="15" height="16" viewBox="0 0 15 16"><rect x="1.5" y="1.5" width="12" height="13" fill="#fff" stroke="#111" stroke-width="1.6"/><path d="M1.5 4.5 h12" stroke="#111" stroke-width="2"/><rect x="3.5" y="7.5" width="8" height="5" fill="none" stroke="#111" stroke-width="1.2"/></svg>
<svg style="position:absolute;left:1070px;top:104px;" width="10" height="9" viewBox="0 0 10 9"><path d="M1.5 1.5 h7" stroke="#222" stroke-width="1.4"/><path d="M1.5 4 h7 l-3.5 4 z" fill="#222"/></svg>
<svg style="position:absolute;left:1084px;top:103.5px;" width="10" height="10" viewBox="0 0 10 10"><path d="M1 1 L9 9 M9 1 L1 9" stroke="#111" stroke-width="1.6" fill="none"/></svg>
<div style="position:absolute;left:233px;top:120px;width:864px;height:421px;background:#eee7ba;"></div>
<div style="position:absolute;left:233px;top:120px;width:864px;height:421px;border:1px solid #f6f2d4;box-sizing:border-box;"></div>
<svg style="position:absolute;left:236.5px;top:122.5px;" width="856.0" height="413.5" viewBox="0 0 856.0 413.5"><style>.ax{font-family:"Liberation Sans",sans-serif;font-size:12px;fill:#f4f4f4;letter-spacing:0.15px;}</style><rect x="0" y="0" width="856.0" height="413.5" fill="#000"/><path d="M13.3 0 v9.5 M13.3 412.5 v-8.5" stroke="#ececec" stroke-width="1.6"/><path d="M40.4 0 v7 M40.4 412.5 v-6" stroke="#6a6a6a" stroke-width="1.1"/><path d="M67.5 0 v7 M67.5 412.5 v-6" stroke="#6a6a6a" stroke-width="1.1"/><path d="M94.5 0 v7 M94.5 412.5 v-6" stroke="#6a6a6a" stroke-width="1.1"/><path d="M121.6 0 v7 M121.6 412.5 v-6" stroke="#6a6a6a" stroke-width="1.1"/><path d="M148.7 0 v9.5 M148.7 412.5 v-8.5" stroke="#ececec" stroke-width="1.6"/><path d="M175.8 0 v7 M175.8 412.5 v-6" stroke="#6a6a6a" stroke-width="1.1"/><path d="M202.9 0 v7 M202.9 412.5 v-6" stroke="#6a6a6a" stroke-width="1.1"/><path d="M229.9 0 v7 M229.9 412.5 v-6" stroke="#6a6a6a" stroke-width="1.1"/><path d="M257.0 0 v7 M257.0 412.5 v-6" stroke="#6a6a6a" stroke-width="1.1"/><path d="M284.1 0 v9.5 M284.1 412.5 v-8.5" stroke="#ececec" stroke-width="1.6"/><path d="M311.2 0 v7 M311.2 412.5 v-6" stroke="#6a6a6a" stroke-width="1.1"/><path d="M338.3 0 v7 M338.3 412.5 v-6" stroke="#6a6a6a" stroke-width="1.1"/><path d="M365.3 0 v7 M365.3 412.5 v-6" stroke="#6a6a6a" stroke-width="1.1"/><path d="M392.4 0 v7 M392.4 412.5 v-6" stroke="#6a6a6a" stroke-width="1.1"/><path d="M419.5 0 v9.5 M419.5 412.5 v-8.5" stroke="#ececec" stroke-width="1.6"/><path d="M446.6 0 v7 M446.6 412.5 v-6" stroke="#6a6a6a" stroke-width="1.1"/><path d="M473.7 0 v7 M473.7 412.5 v-6" stroke="#6a6a6a" stroke-width="1.1"/><path d="M500.7 0 v7 M500.7 412.5 v-6" stroke="#6a6a6a" stroke-width="1.1"/><path d="M527.8 0 v7 M527.8 412.5 v-6" stroke="#6a6a6a" stroke-width="1.1"/><path d="M554.9 0 v9.5 M554.9 412.5 v-8.5" stroke="#ececec" stroke-width="1.6"/><path d="M582.0 0 v7 M582.0 412.5 v-6" stroke="#6a6a6a" stroke-width="1.1"/><path d="M609.1 0 v7 M609.1 412.5 v-6" stroke="#6a6a6a" stroke-width="1.1"/><path d="M636.1 0 v7 M636.1 412.5 v-6" stroke="#6a6a6a" stroke-width="1.1"/><path d="M663.2 0 v7 M663.2 412.5 v-6" stroke="#6a6a6a" stroke-width="1.1"/><path d="M690.3 0 v9.5 M690.3 412.5 v-8.5" stroke="#ececec" stroke-width="1.6"/><path d="M717.4 0 v7 M717.4 412.5 v-6" stroke="#6a6a6a" stroke-width="1.1"/><path d="M744.5 0 v7 M744.5 412.5 v-6" stroke="#6a6a6a" stroke-width="1.1"/><path d="M771.5 0 v7 M771.5 412.5 v-6" stroke="#6a6a6a" stroke-width="1.1"/><path d="M798.6 0 v7 M798.6 412.5 v-6" stroke="#6a6a6a" stroke-width="1.1"/><path d="M825.7 0 v9.5 M825.7 412.5 v-8.5" stroke="#ececec" stroke-width="1.6"/><path d="M852.8 0 v7 M852.8 412.5 v-6" stroke="#6a6a6a" stroke-width="1.1"/><path d="M0 2.4 h7 M856.0 2.4 h-8" stroke="#6c6c6c" stroke-width="1.2"/><path d="M0 29.4 h7 M856.0 29.4 h-8" stroke="#6c6c6c" stroke-width="1.2"/><path d="M0 56.4 h7 M856.0 56.4 h-8" stroke="#6c6c6c" stroke-width="1.2"/><path d="M0 83.3 h7 M856.0 83.3 h-8" stroke="#6c6c6c" stroke-width="1.2"/><path d="M0 110.3 h9 M856.0 110.3 h-10" stroke="#e8e8e8" stroke-width="1.6"/><path d="M0 137.3 h7 M856.0 137.3 h-8" stroke="#6c6c6c" stroke-width="1.2"/><path d="M0 164.2 h7 M856.0 164.2 h-8" stroke="#6c6c6c" stroke-width="1.2"/><path d="M0 191.2 h7 M856.0 191.2 h-8" stroke="#6c6c6c" stroke-width="1.2"/><path d="M0 218.2 h7 M856.0 218.2 h-8" stroke="#6c6c6c" stroke-width="1.2"/><path d="M0 245.1 h9 M856.0 245.1 h-10" stroke="#e8e8e8" stroke-width="1.6"/><path d="M0 272.1 h7 M856.0 272.1 h-8" stroke="#6c6c6c" stroke-width="1.2"/><path d="M0 299.1 h7 M856.0 299.1 h-8" stroke="#6c6c6c" stroke-width="1.2"/><path d="M0 326.1 h7 M856.0 326.1 h-8" stroke="#6c6c6c" stroke-width="1.2"/><path d="M0 353.0 h7 M856.0 353.0 h-8" stroke="#6c6c6c" stroke-width="1.2"/><path d="M0 380.0 h9 M856.0 380.0 h-10" stroke="#e8e8e8" stroke-width="1.6"/><path d="M0 407.0 h7 M856.0 407.0 h-8" stroke="#6c6c6c" stroke-width="1.2"/><text transform="translate(9.0,13.5) rotate(90)" class="ax">493925</text><text transform="translate(17.6,397.5) rotate(-90)" class="ax">493925</text><text transform="translate(144.4,13.5) rotate(90)" class="ax">493950</text><text transform="translate(153.0,397.5) rotate(-90)" class="ax">493950</text><text transform="translate(279.8,13.5) rotate(90)" class="ax">493975</text><text transform="translate(288.4,397.5) rotate(-90)" class="ax">493975</text><text transform="translate(415.2,13.5) rotate(90)" class="ax">494000</text><text transform="translate(423.8,397.5) rotate(-90)" class="ax">494000</text><text transform="translate(550.6,13.5) rotate(90)" class="ax">494025</text><text transform="translate(559.2,397.5) rotate(-90)" class="ax">494025</text><text transform="translate(686.0,13.5) rotate(90)" class="ax">494050</text><text transform="translate(694.6,397.5) rotate(-90)" class="ax">494050</text><text transform="translate(821.4,13.5) rotate(90)" class="ax">494075</text><text transform="translate(830.0,397.5) rotate(-90)" class="ax">494075</text><text x="13.3" y="114.6" class="ax">3930025</text><text x="839.3" y="114.6" class="ax" text-anchor="end">3930025</text><text x="13.3" y="249.4" class="ax">3930000</text><text x="839.3" y="249.4" class="ax" text-anchor="end">3930000</text><text x="13.3" y="384.3" class="ax">3929975</text><text x="839.3" y="384.3" class="ax" text-anchor="end">3929975</text><circle cx="378.5" cy="72.5" r="3.0" fill="#052406" stroke="#50e24c" stroke-width="1.85"/><circle cx="427.7" cy="70.7" r="3.0" fill="#052406" stroke="#50e24c" stroke-width="1.85"/><circle cx="475.6" cy="67.3" r="3.0" fill="#052406" stroke="#50e24c" stroke-width="1.85"/><circle cx="524.2" cy="65.5" r="3.0" fill="#052406" stroke="#50e24c" stroke-width="1.85"/><circle cx="572.8" cy="63.8" r="3.0" fill="#052406" stroke="#50e24c" stroke-width="1.85"/><circle cx="258.8" cy="122.1" r="3.0" fill="#052406" stroke="#50e24c" stroke-width="1.85"/><circle cx="307.4" cy="119.4" r="3.0" fill="#052406" stroke="#50e24c" stroke-width="1.85"/><circle cx="356.3" cy="116.3" r="3.0" fill="#052406" stroke="#50e24c" stroke-width="1.85"/><circle cx="405.0" cy="115.2" r="3.0" fill="#052406" stroke="#50e24c" stroke-width="1.85"/><circle cx="454.1" cy="112.4" r="3.0" fill="#052406" stroke="#50e24c" stroke-width="1.85"/><circle cx="501.6" cy="109.7" r="3.0" fill="#052406" stroke="#50e24c" stroke-width="1.85"/><circle cx="550.6" cy="107.5" r="3.0" fill="#052406" stroke="#50e24c" stroke-width="1.85"/><circle cx="285.2" cy="164.2" r="3.0" fill="#052406" stroke="#50e24c" stroke-width="1.85"/><circle cx="333.8" cy="161.0" r="3.0" fill="#052406" stroke="#50e24c" stroke-width="1.85"/><circle cx="382.7" cy="158.3" r="3.0" fill="#052406" stroke="#50e24c" stroke-width="1.85"/><circle cx="431.3" cy="157.2" r="3.0" fill="#052406" stroke="#50e24c" stroke-width="1.85"/><circle cx="480.4" cy="154.4" r="3.0" fill="#052406" stroke="#50e24c" stroke-width="1.85"/><circle cx="528.0" cy="151.3" r="3.0" fill="#052406" stroke="#50e24c" stroke-width="1.85"/><circle cx="577.0" cy="150.6" r="3.0" fill="#052406" stroke="#50e24c" stroke-width="1.85"/><circle cx="311.2" cy="205.8" r="3.0" fill="#052406" stroke="#50e24c" stroke-width="1.85"/><circle cx="360.2" cy="203.1" r="3.0" fill="#052406" stroke="#50e24c" stroke-width="1.85"/><circle cx="409.1" cy="200.3" r="3.0" fill="#052406" stroke="#50e24c" stroke-width="1.85"/><circle cx="457.9" cy="199.2" r="3.0" fill="#052406" stroke="#50e24c" stroke-width="1.85"/><circle cx="506.5" cy="196.5" r="3.0" fill="#052406" stroke="#50e24c" stroke-width="1.85"/><circle cx="555.4" cy="193.3" r="3.0" fill="#052406" stroke="#50e24c" stroke-width="1.85"/><circle cx="603.0" cy="192.3" r="3.0" fill="#052406" stroke="#50e24c" stroke-width="1.85"/><circle cx="289.0" cy="251.2" r="3.0" fill="#052406" stroke="#50e24c" stroke-width="1.85"/><circle cx="337.6" cy="248.4" r="3.0" fill="#052406" stroke="#50e24c" stroke-width="1.85"/><circle cx="386.5" cy="245.3" r="3.0" fill="#052406" stroke="#50e24c" stroke-width="1.85"/><circle cx="435.3" cy="244.2" r="3.0" fill="#052406" stroke="#50e24c" stroke-width="1.85"/><circle cx="483.9" cy="241.1" r="3.0" fill="#052406" stroke="#50e24c" stroke-width="1.85"/><circle cx="581.8" cy="237.3" r="3.0" fill="#052406" stroke="#50e24c" stroke-width="1.85"/><circle cx="315.0" cy="292.8" r="3.0" fill="#052406" stroke="#50e24c" stroke-width="1.85"/><circle cx="364.0" cy="290.1" r="3.0" fill="#052406" stroke="#50e24c" stroke-width="1.85"/><circle cx="412.9" cy="287.3" r="3.0" fill="#052406" stroke="#50e24c" stroke-width="1.85"/><circle cx="461.7" cy="286.2" r="3.0" fill="#052406" stroke="#50e24c" stroke-width="1.85"/><circle cx="510.7" cy="283.1" r="3.0" fill="#052406" stroke="#50e24c" stroke-width="1.85"/><circle cx="559.3" cy="280.3" r="3.0" fill="#052406" stroke="#50e24c" stroke-width="1.85"/><circle cx="608.2" cy="279.3" r="3.0" fill="#052406" stroke="#50e24c" stroke-width="1.85"/><circle cx="341.8" cy="335.2" r="3.0" fill="#052406" stroke="#50e24c" stroke-width="1.85"/><circle cx="390.7" cy="332.1" r="3.0" fill="#052406" stroke="#50e24c" stroke-width="1.85"/><circle cx="439.1" cy="331.0" r="3.0" fill="#052406" stroke="#50e24c" stroke-width="1.85"/></svg>
<div style="position:absolute;left:231px;top:541px;width:867px;height:25px;background:linear-gradient(180deg,#ffffff 0%,#f6f6f6 50%,#e9e9e9 100%);"></div>
<span class="t" style="left:235.4px;top:548.2px;font-size:12px;line-height:16px;color:#222;transform:scaleX(0.961);">Command</span>
<svg style="position:absolute;left:1069px;top:551px;" width="10" height="11" viewBox="0 0 10 11"><path d="M2 1.5 h5 M2.5 1 v5 M5.5 1 v5 M6.5 1 v5 M0.5 6.5 h8 M4.5 7 v3.5" stroke="#222" stroke-width="1" fill="none" shape-rendering="crispEdges"/></svg>
<svg style="position:absolute;left:1084px;top:551px;" width="10" height="10" viewBox="0 0 10 10"><path d="M1 1 L9 9 M9 1 L1 9" stroke="#111" stroke-width="1.6" fill="none"/></svg>
<div style="position:absolute;left:231px;top:565px;width:867px;height:1px;background:#d8d4b0;"></div>
<div style="position:absolute;left:232px;top:566px;width:865px;height:84px;background:#fff;border-style:solid;border-color:#d2d2ae #b4b494 #a4a48c #ccccaa;border-width:1.5px 2px 1.5px 1.5px;box-sizing:border-box;"></div>
<div style="position:absolute;left:231px;top:650px;width:867px;height:22px;background:linear-gradient(180deg,#f8f8f8,#ececec);"></div>
<div style="position:absolute;left:340px;top:651px;width:77px;height:20px;background:linear-gradient(180deg,#f8e68c,#f6eaa6);border:1px solid #c8b060;border-top:none;border-radius:0 0 3px 3px;box-sizing:border-box;"></div>
<div style="position:absolute;left:419px;top:651px;width:79px;height:20px;background:linear-gradient(180deg,#dde6b4,#e6ecc6);border:1px solid #a8b080;border-top:none;border-radius:0 0 3px 3px;box-sizing:border-box;"></div>
<span class="t" style="left:344.9px;top:653.2px;font-size:12px;line-height:16px;color:#222;transform:scaleX(0.971);">urvey Report</span>
<svg style="position:absolute;left:423px;top:654px;" width="15" height="13" viewBox="0 0 15 13"><rect x="1" y="1" width="13" height="11" fill="#fff" stroke="#222" stroke-width="1.2"/><path d="M1 3 h13" stroke="#222" stroke-width="2"/><path d="M3 6 l2 1.5 l-2 1.5" stroke="#222" stroke-width="0.9" fill="none"/></svg>
<span class="t" style="left:439.9px;top:653.2px;font-size:12px;line-height:16px;color:#222;transform:scaleX(0.943);">Command</span>
<div style="position:absolute;left:0px;top:672px;width:1280px;height:30px;background:linear-gradient(90deg,#ececec,#f6f6f6 60%,#fcfcfc);"></div>
<div style="position:absolute;left:300px;top:674px;width:99px;height:24px;background:linear-gradient(180deg,#fdfdfd 0%,#f4f4f4 45%,#e4e4e4 100%);border-radius:4px;box-shadow:0 1px 0 #b8b8b8;"></div>
<div style="position:absolute;left:389px;top:674px;width:10px;height:24px;background:linear-gradient(180deg,#c2c2c2 0%,#b0b0b0 50%,#9c9c9c 100%);border-radius:0 3px 3px 0;"></div>
<div style="position:absolute;left:391px;top:689px;width:5px;height:1px;background:#000;box-shadow:1px 1px 0 #fff;"></div>
<svg style="position:absolute;left:390px;top:691px;" width="8" height="5" viewBox="0 0 8 5"><path d="M1.5 0.5 L6.5 0.5 L4 3.5 Z" fill="#000"/><path d="M2.5 1.5 L7.5 1.5 L5 4.5 Z" fill="#fff" opacity="0.6"/><path d="M1.5 0.5 L6.5 0.5 L4 3.5 Z" fill="#000"/></svg>
<div style="position:absolute;left:360px;top:678px;width:1px;height:16px;background:#a8a8a8;box-shadow:1px 0 0 #fff;"></div>
<div style="position:absolute;left:401px;top:674px;width:650.5px;height:24px;background:linear-gradient(180deg,#fdfdfd 0%,#f4f4f4 45%,#e4e4e4 100%);border-radius:4px;box-shadow:0 1px 0 #b8b8b8;"></div>
<div style="position:absolute;left:1041.5px;top:674px;width:10px;height:24px;background:linear-gradient(180deg,#c2c2c2 0%,#b0b0b0 50%,#9c9c9c 100%);border-radius:0 3px 3px 0;"></div>
<div style="position:absolute;left:1043.5px;top:689px;width:5px;height:1px;background:#000;box-shadow:1px 1px 0 #fff;"></div>
<svg style="position:absolute;left:1042.5px;top:691px;" width="8" height="5" viewBox="0 0 8 5"><path d="M1.5 0.5 L6.5 0.5 L4 3.5 Z" fill="#000"/><path d="M2.5 1.5 L7.5 1.5 L5 4.5 Z" fill="#fff" opacity="0.6"/><path d="M1.5 0.5 L6.5 0.5 L4 3.5 Z" fill="#000"/></svg>
<div style="position:absolute;left:405px;top:680px;width:2px;height:2px;background:#9a9a9a;border-radius:1px;"></div>
<div style="position:absolute;left:405px;top:684px;width:2px;height:2px;background:#9a9a9a;border-radius:1px;"></div>
<div style="position:absolute;left:405px;top:688px;width:2px;height:2px;background:#9a9a9a;border-radius:1px;"></div>
<div style="position:absolute;left:405px;top:692px;width:2px;height:2px;background:#9a9a9a;border-radius:1px;"></div>
<div style="position:absolute;left:409px;top:676px;width:144px;height:19px;background:#fff;"></div>
<div style="position:absolute;left:539px;top:677px;width:14px;height:17px;background:#ededed;"></div>
<span class="t" style="left:413.9px;top:678.7px;font-size:12px;line-height:16px;color:#222;transform:scaleX(0.936);">Drillholes</span>
<svg style="position:absolute;left:542px;top:684px;" width="8" height="6" viewBox="0 0 8 6"><path d="M1 1 h6 l-3 4 z" fill="#222"/></svg>
<div style="position:absolute;left:555px;top:676px;width:144px;height:19px;background:#fff;"></div>
<div style="position:absolute;left:685px;top:677px;width:14px;height:17px;background:#ededed;"></div>
<span class="t" style="left:560.4px;top:678.7px;font-size:12px;line-height:16px;color:#222;">composite (drillholes)</span>
<svg style="position:absolute;left:688px;top:684px;" width="8" height="6" viewBox="0 0 8 6"><path d="M1 1 h6 l-3 4 z" fill="#222"/></svg>
<div style="position:absolute;left:701px;top:676px;width:72px;height:19px;background:#fff;"></div>
<div style="position:absolute;left:759px;top:677px;width:14px;height:17px;background:#ededed;"></div>
<span class="t" style="left:706.4px;top:678.7px;font-size:12px;line-height:16px;color:#222;transform:scaleX(0.958);">LENTH</span>
<svg style="position:absolute;left:762px;top:684px;" width="8" height="6" viewBox="0 0 8 6"><path d="M1 1 h6 l-3 4 z" fill="#222"/></svg>
<div style="position:absolute;left:775px;top:676px;width:170px;height:19px;background:#fff;"></div>
<div style="position:absolute;left:930px;top:677px;width:14px;height:17px;background:#ededed;"></div>
<span class="t" style="left:782.5px;top:678.7px;font-size:12px;line-height:16px;color:#222;">0</span>
<svg style="position:absolute;left:933px;top:684px;" width="8" height="6" viewBox="0 0 8 6"><path d="M1 1 h6 l-3 4 z" fill="#222"/></svg>
<div style="position:absolute;left:949px;top:678px;width:1px;height:16px;background:#a8a8a8;box-shadow:1px 0 0 #fff;"></div>
<div style="position:absolute;left:1053.5px;top:674px;width:93.0px;height:24px;background:linear-gradient(180deg,#fdfdfd 0%,#f4f4f4 45%,#e4e4e4 100%);border-radius:4px;box-shadow:0 1px 0 #b8b8b8;"></div>
<div style="position:absolute;left:1136.5px;top:674px;width:10px;height:24px;background:linear-gradient(180deg,#c2c2c2 0%,#b0b0b0 50%,#9c9c9c 100%);border-radius:0 3px 3px 0;"></div>
<div style="position:absolute;left:1138.5px;top:689px;width:5px;height:1px;background:#000;box-shadow:1px 1px 0 #fff;"></div>
<svg style="position:absolute;left:1137.5px;top:691px;" width="8" height="5" viewBox="0 0 8 5"><path d="M1.5 0.5 L6.5 0.5 L4 3.5 Z" fill="#000"/><path d="M2.5 1.5 L7.5 1.5 L5 4.5 Z" fill="#fff" opacity="0.6"/><path d="M1.5 0.5 L6.5 0.5 L4 3.5 Z" fill="#000"/></svg>
<div style="position:absolute;left:1057.5px;top:680px;width:2px;height:2px;background:#9a9a9a;border-radius:1px;"></div>
<div style="position:absolute;left:1057.5px;top:684px;width:2px;height:2px;background:#9a9a9a;border-radius:1px;"></div>
<div style="position:absolute;left:1057.5px;top:688px;width:2px;height:2px;background:#9a9a9a;border-radius:1px;"></div>
<div style="position:absolute;left:1057.5px;top:692px;width:2px;height:2px;background:#9a9a9a;border-radius:1px;"></div>
<div style="position:absolute;left:1108px;top:678px;width:1px;height:16px;background:#a8a8a8;box-shadow:1px 0 0 #fff;"></div>
<div style="position:absolute;left:0px;top:701px;width:1280px;height:17px;background:#f0f0f0;border-top:1px solid #dcdcdc;box-sizing:border-box;"></div>
<div style="position:absolute;left:0px;top:718px;width:1280px;height:2px;background:#111;"></div>
<div style="position:absolute;left:649px;top:703px;width:119px;height:14px;border:1.5px solid #a8a8a8;border-right-color:#e0e0e0;border-bottom-color:#fafafa;box-sizing:border-box;background:#ebebeb;"></div>
<span class="t" style="left:987.4px;top:703.7px;font-size:12px;line-height:16px;color:#222;">Cursor outside window</span>
<div style="position:absolute;left:1113px;top:704px;width:1px;height:13px;background:#b0b0b0;"></div>
<div style="position:absolute;left:1116px;top:704px;width:1px;height:13px;background:#b0b0b0;"></div>
<div style="position:absolute;left:1122px;top:703px;width:59px;height:15px;border:1px solid #a8a8a8;border-right-color:#fff;border-bottom-color:#fff;box-sizing:border-box;"></div>
<span class="t" style="left:1123.9px;top:703.7px;font-size:12px;line-height:16px;color:#9a9a9a;transform:scaleX(0.879);">COMMAND</span>
<div style="position:absolute;left:1184px;top:703px;width:25px;height:15px;border:1px solid #a8a8a8;border-right-color:#fff;border-bottom-color:#fff;box-sizing:border-box;"></div>
<span class="t" style="left:1185.9px;top:703.7px;font-size:12px;line-height:16px;color:#9a9a9a;transform:scaleX(0.880);">CAP</span>
<div style="position:absolute;left:1211px;top:703px;width:28px;height:15px;border:1px solid #a8a8a8;border-right-color:#fff;border-bottom-color:#fff;box-sizing:border-box;"></div>
<span class="t" style="left:1212.9px;top:703.7px;font-size:12px;line-height:16px;color:#111;transform:scaleX(0.903);">NUM</span>
<div style="position:absolute;left:1241px;top:703px;width:30px;height:15px;border:1px solid #a8a8a8;border-right-color:#fff;border-bottom-color:#fff;box-sizing:border-box;"></div>
<span class="t" style="left:1242.9px;top:703.7px;font-size:12px;line-height:16px;color:#9a9a9a;transform:scaleX(0.834);">SCRL</span>
<div style="position:absolute;left:1273px;top:703px;width:27px;height:15px;border:1px solid #a8a8a8;border-right-color:#fff;border-bottom-color:#fff;box-sizing:border-box;"></div>
<span class="t" style="left:1274.9px;top:703.7px;font-size:12px;line-height:16px;color:#9a9a9a;transform:scaleX(0.935);">REC</span>
<div style="position:absolute;left:1099px;top:96px;width:181px;height:577px;background:#fff;"></div>
<div style="position:absolute;left:1099px;top:97px;width:181px;height:20px;background:linear-gradient(180deg,#ffffff 0%,#f6f6f6 50%,#e9e9e9 100%);"></div>
<span class="t" style="left:1104.9px;top:99.2px;font-size:12px;line-height:16px;color:#222;">Properties</span>
<svg style="position:absolute;left:1253px;top:102px;" width="10" height="11" viewBox="0 0 10 11"><path d="M2 1.5 h5 M2.5 1 v5 M5.5 1 v5 M6.5 1 v5 M0.5 6.5 h8 M4.5 7 v3.5" stroke="#222" stroke-width="1" fill="none" shape-rendering="crispEdges"/></svg>
<svg style="position:absolute;left:1267px;top:102px;" width="10" height="10" viewBox="0 0 10 10"><path d="M1 1 L9 9 M9 1 L1 9" stroke="#111" stroke-width="1.6" fill="none"/></svg>
<div style="position:absolute;left:1102px;top:117.5px;width:178px;height:18.5px;background:#fff;border:1px solid #c8c8c8;border-top:2px solid #808080;border-left:2px solid #8a8a8a;box-sizing:border-box;"></div>
<span class="t" style="left:1104.9px;top:119.7px;font-size:12px;line-height:16px;color:#111;transform:scaleX(0.869);">Design Projection</span>
<div style="position:absolute;left:1263px;top:120px;width:16px;height:15px;background:linear-gradient(180deg,#f8f8f8,#dcdcdc);border:1px solid #b0b0b0;box-sizing:border-box;"></div>
<svg style="position:absolute;left:1267px;top:125.5px;" width="8" height="5" viewBox="0 0 8 5"><path d="M0.5 0.5 h7 l-3.5 4 z" fill="#111"/></svg>
<div style="position:absolute;left:1100px;top:138px;width:180px;height:22px;background:#f4f4f4;"></div>
<div style="position:absolute;left:1103px;top:139px;width:21px;height:20px;background:#d4e6f8;border:1px solid #5a9ae0;box-sizing:border-box;"></div>
<div style="position:absolute;left:1147px;top:139px;width:21px;height:20px;background:#d4e6f8;border:1px solid #5a9ae0;box-sizing:border-box;"></div>
<div style="position:absolute;left:1175px;top:139px;width:22px;height:20px;background:#d4e6f8;border:1px solid #5a9ae0;box-sizing:border-box;"></div>
<div style="position:absolute;left:1171px;top:142px;width:1px;height:14px;background:#a8a8a8;box-shadow:1px 0 0 #fff;"></div>
<div style="position:absolute;left:1223px;top:142px;width:1px;height:14px;background:#a8a8a8;box-shadow:1px 0 0 #fff;"></div>
<div style="position:absolute;left:1100px;top:160px;width:16px;height:512px;background:#eeeeee;"></div>
<div style="position:absolute;left:1100px;top:160.5px;width:180px;height:16.3px;background:#eaeaea;"></div>
<svg style="position:absolute;left:1105px;top:165.0px;" width="9" height="9" viewBox="0 0 9 9"><rect x="0.6" y="0.6" width="7.8" height="7.8" fill="#fff" stroke="#333" stroke-width="1.2"/><path d="M2.5 4.5 h4" stroke="#111" stroke-width="1.2"/></svg>
<span class="t" style="left:1119.4px;top:159.8px;font-size:12px;line-height:16px;color:#8a8a8a;font-weight:bold;transform:scaleX(0.973);">View Direction</span>
<div style="position:absolute;left:1116px;top:176.1px;width:164px;height:15.6px;background:#fff;border-bottom:1px solid #ececec;box-sizing:border-box;"></div>
<div style="position:absolute;left:1199px;top:176.1px;width:81px;height:14.6px;background:#ececec;"></div>
<span class="t" style="left:1119.4px;top:175.9px;font-size:12px;line-height:16px;color:#111;transform:scaleX(0.835);">Azimuth</span>
<span class="t" style="left:1201.4px;top:176.4px;font-size:12px;line-height:16px;color:#8a8a8a;transform:scaleX(0.908);">0.00</span>
<div style="position:absolute;left:1116px;top:191.7px;width:164px;height:15.6px;background:#fff;border-bottom:1px solid #ececec;box-sizing:border-box;"></div>
<div style="position:absolute;left:1199px;top:191.7px;width:81px;height:14.6px;background:#ececec;"></div>
<span class="t" style="left:1119.4px;top:191.5px;font-size:12px;line-height:16px;color:#111;transform:scaleX(0.871);">Dip</span>
<span class="t" style="left:1201.4px;top:192.0px;font-size:12px;line-height:16px;color:#8a8a8a;transform:scaleX(0.906);">90.00</span>
<div style="position:absolute;left:1100px;top:207.3px;width:180px;height:16.3px;background:#eaeaea;"></div>
<svg style="position:absolute;left:1105px;top:211.8px;" width="9" height="9" viewBox="0 0 9 9"><rect x="0.6" y="0.6" width="7.8" height="7.8" fill="#fff" stroke="#333" stroke-width="1.2"/><path d="M2.5 4.5 h4" stroke="#111" stroke-width="1.2"/></svg>
<span class="t" style="left:1119.4px;top:206.6px;font-size:12px;line-height:16px;color:#8a8a8a;font-weight:bold;transform:scaleX(0.982);">View Center</span>
<div style="position:absolute;left:1116px;top:222.9px;width:164px;height:15.6px;background:#fff;border-bottom:1px solid #ececec;box-sizing:border-box;"></div>
<span class="t" style="left:1121.0px;top:222.7px;font-size:12px;line-height:16px;color:#111;">X</span>
<span class="t" style="left:1201.4px;top:223.2px;font-size:12px;line-height:16px;color:#111;transform:scaleX(0.894);">494001.37</span>
<div style="position:absolute;left:1116px;top:238.5px;width:164px;height:15.6px;background:#fff;border-bottom:1px solid #ececec;box-sizing:border-box;"></div>
<span class="t" style="left:1121.0px;top:238.3px;font-size:12px;line-height:16px;color:#111;">Y</span>
<span class="t" style="left:1201.4px;top:238.8px;font-size:12px;line-height:16px;color:#111;transform:scaleX(0.895);">3930007.26</span>
<div style="position:absolute;left:1116px;top:254.1px;width:164px;height:15.6px;background:#fff;border-bottom:1px solid #ececec;box-sizing:border-box;"></div>
<span class="t" style="left:1121.0px;top:253.9px;font-size:12px;line-height:16px;color:#111;">Z</span>
<span class="t" style="left:1201.4px;top:254.4px;font-size:12px;line-height:16px;color:#111;transform:scaleX(0.923);">1166.73</span>
<div style="position:absolute;left:1100px;top:269.7px;width:180px;height:16.3px;background:#eaeaea;"></div>
<svg style="position:absolute;left:1105px;top:274.2px;" width="9" height="9" viewBox="0 0 9 9"><rect x="0.6" y="0.6" width="7.8" height="7.8" fill="#fff" stroke="#333" stroke-width="1.2"/><path d="M2.5 4.5 h4" stroke="#111" stroke-width="1.2"/></svg>
<span class="t" style="left:1119.4px;top:269.0px;font-size:12px;line-height:16px;color:#8a8a8a;font-weight:bold;transform:scaleX(0.964);">Appearance</span>
<div style="position:absolute;left:1100px;top:285.3px;width:180px;height:16.3px;background:#eaeaea;"></div>
<svg style="position:absolute;left:1105px;top:289.8px;" width="9" height="9" viewBox="0 0 9 9"><rect x="0.6" y="0.6" width="7.8" height="7.8" fill="#fff" stroke="#333" stroke-width="1.2"/><path d="M2.5 4.5 h4" stroke="#111" stroke-width="1.2"/></svg>
<span class="t" style="left:1119.4px;top:284.6px;font-size:12px;line-height:16px;color:#8a8a8a;font-weight:bold;transform:scaleX(0.956);">Section Mid-point</span>
<div style="position:absolute;left:1116px;top:300.9px;width:164px;height:15.6px;background:#fff;border-bottom:1px solid #ececec;box-sizing:border-box;"></div>
<div style="position:absolute;left:1199px;top:300.9px;width:81px;height:14.6px;background:#ececec;"></div>
<span class="t" style="left:1119.4px;top:300.7px;font-size:12px;line-height:16px;color:#111;transform:scaleX(0.867);">Easting</span>
<span class="t" style="left:1201.4px;top:301.2px;font-size:12px;line-height:16px;color:#8a8a8a;transform:scaleX(0.894);">494001.37</span>
<div style="position:absolute;left:1116px;top:316.5px;width:164px;height:15.6px;background:#fff;border-bottom:1px solid #ececec;box-sizing:border-box;"></div>
<div style="position:absolute;left:1199px;top:316.5px;width:81px;height:14.6px;background:#ececec;"></div>
<span class="t" style="left:1119.4px;top:316.3px;font-size:12px;line-height:16px;color:#111;transform:scaleX(0.875);">Northing</span>
<span class="t" style="left:1201.4px;top:316.8px;font-size:12px;line-height:16px;color:#8a8a8a;transform:scaleX(0.895);">3930007.26</span>
<div style="position:absolute;left:1116px;top:332.1px;width:164px;height:15.6px;background:#fff;border-bottom:1px solid #ececec;box-sizing:border-box;"></div>
<div style="position:absolute;left:1199px;top:332.1px;width:81px;height:14.6px;background:#ececec;"></div>
<span class="t" style="left:1119.4px;top:331.9px;font-size:12px;line-height:16px;color:#111;transform:scaleX(0.896);">Level</span>
<span class="t" style="left:1201.4px;top:332.4px;font-size:12px;line-height:16px;color:#8a8a8a;transform:scaleX(0.923);">1166.73</span>
<div style="position:absolute;left:1100px;top:347.7px;width:180px;height:16.3px;background:#eaeaea;"></div>
<svg style="position:absolute;left:1105px;top:352.2px;" width="9" height="9" viewBox="0 0 9 9"><rect x="0.6" y="0.6" width="7.8" height="7.8" fill="#fff" stroke="#333" stroke-width="1.2"/><path d="M2.5 4.5 h4" stroke="#111" stroke-width="1.2"/></svg>
<span class="t" style="left:1119.4px;top:347.0px;font-size:12px;line-height:16px;color:#8a8a8a;font-weight:bold;transform:scaleX(0.969);">Section Orientation</span>
<div style="position:absolute;left:1116px;top:363.3px;width:164px;height:15.6px;background:#fff;border-bottom:1px solid #ececec;box-sizing:border-box;"></div>
<span class="t" style="left:1119.4px;top:363.1px;font-size:12px;line-height:16px;color:#111;transform:scaleX(0.835);">Azimuth</span>
<span class="t" style="left:1201.4px;top:363.6px;font-size:12px;line-height:16px;color:#111;transform:scaleX(0.908);">0.00</span>
<div style="position:absolute;left:1116px;top:378.9px;width:164px;height:15.6px;background:#fff;border-bottom:1px solid #ececec;box-sizing:border-box;"></div>
<span class="t" style="left:1119.4px;top:378.7px;font-size:12px;line-height:16px;color:#111;transform:scaleX(0.871);">Dip</span>
<span class="t" style="left:1201.4px;top:379.2px;font-size:12px;line-height:16px;color:#111;transform:scaleX(0.908);">0.00</span>
<div style="position:absolute;left:1100px;top:394.5px;width:180px;height:16.3px;background:#eaeaea;"></div>
<svg style="position:absolute;left:1105px;top:399.0px;" width="9" height="9" viewBox="0 0 9 9"><rect x="0.6" y="0.6" width="7.8" height="7.8" fill="#fff" stroke="#333" stroke-width="1.2"/><path d="M2.5 4.5 h4" stroke="#111" stroke-width="1.2"/></svg>
<span class="t" style="left:1119.4px;top:393.8px;font-size:12px;line-height:16px;color:#8a8a8a;font-weight:bold;transform:scaleX(0.973);">Section Definition</span>
<div style="position:absolute;left:1100px;top:410.1px;width:180px;height:16.3px;background:#eaeaea;"></div>
<svg style="position:absolute;left:1105px;top:414.6px;" width="9" height="9" viewBox="0 0 9 9"><rect x="0.6" y="0.6" width="7.8" height="7.8" fill="#fff" stroke="#333" stroke-width="1.2"/><path d="M2.5 4.5 h4" stroke="#111" stroke-width="1.2"/></svg>
<span class="t" style="left:1119.4px;top:409.4px;font-size:12px;line-height:16px;color:#8a8a8a;font-weight:bold;transform:scaleX(1.005);">Sections Table</span>
<div style="position:absolute;left:1100px;top:425.7px;width:180px;height:16.3px;background:#eaeaea;"></div>
<svg style="position:absolute;left:1105px;top:430.2px;" width="9" height="9" viewBox="0 0 9 9"><rect x="0.6" y="0.6" width="7.8" height="7.8" fill="#fff" stroke="#333" stroke-width="1.2"/><path d="M2.5 4.5 h4" stroke="#111" stroke-width="1.2"/></svg>
<span class="t" style="left:1119.4px;top:425.0px;font-size:12px;line-height:16px;color:#8a8a8a;font-weight:bold;transform:scaleX(0.959);">Section Clipping</span>
<div style="position:absolute;left:1116px;top:441.3px;width:164px;height:15.6px;background:#fff;border-bottom:1px solid #ececec;box-sizing:border-box;"></div>
<span class="t" style="left:1119.4px;top:441.1px;font-size:12px;line-height:16px;color:#111;transform:scaleX(0.850);">Apply Clipping</span>
<span class="t" style="left:1202.0px;top:441.6px;font-size:12px;line-height:16px;color:#111;transform:scaleX(0.847);">No</span>
<div style="position:absolute;left:1100px;top:456.9px;width:180px;height:16.3px;background:#eaeaea;"></div>
<svg style="position:absolute;left:1105px;top:461.4px;" width="9" height="9" viewBox="0 0 9 9"><rect x="0.6" y="0.6" width="7.8" height="7.8" fill="#fff" stroke="#333" stroke-width="1.2"/><path d="M2.5 4.5 h4" stroke="#111" stroke-width="1.2"/></svg>
<span class="t" style="left:1119.4px;top:456.2px;font-size:12px;line-height:16px;color:#8a8a8a;font-weight:bold;">Position</span>
<div style="position:absolute;left:1100px;top:472.5px;width:180px;height:16.3px;background:#eaeaea;"></div>
<svg style="position:absolute;left:1105px;top:477.0px;" width="9" height="9" viewBox="0 0 9 9"><rect x="0.6" y="0.6" width="7.8" height="7.8" fill="#fff" stroke="#333" stroke-width="1.2"/><path d="M2.5 4.5 h4" stroke="#111" stroke-width="1.2"/></svg>
<span class="t" style="left:1119.4px;top:471.8px;font-size:12px;line-height:16px;color:#8a8a8a;font-weight:bold;transform:scaleX(0.989);">General</span>
<div style="position:absolute;left:1100px;top:488.1px;width:180px;height:16.3px;background:#eaeaea;"></div>
<svg style="position:absolute;left:1105px;top:492.6px;" width="9" height="9" viewBox="0 0 9 9"><rect x="0.6" y="0.6" width="7.8" height="7.8" fill="#fff" stroke="#333" stroke-width="1.2"/><path d="M2.5 4.5 h4" stroke="#111" stroke-width="1.2"/></svg>
<span class="t" style="left:1119.4px;top:487.4px;font-size:12px;line-height:16px;color:#8a8a8a;font-weight:bold;transform:scaleX(1.027);">Scale</span>
<div style="position:absolute;left:1100px;top:503.7px;width:180px;height:16.3px;background:#eaeaea;"></div>
<svg style="position:absolute;left:1105px;top:508.2px;" width="9" height="9" viewBox="0 0 9 9"><rect x="0.6" y="0.6" width="7.8" height="7.8" fill="#fff" stroke="#333" stroke-width="1.2"/><path d="M2.5 4.5 h4" stroke="#111" stroke-width="1.2"/></svg>
<span class="t" style="left:1119.4px;top:503.0px;font-size:12px;line-height:16px;color:#8a8a8a;font-weight:bold;transform:scaleX(0.974);">View Exagge</span>
<div style="position:absolute;left:1116px;top:519.3px;width:164px;height:15.6px;background:#fff;border-bottom:1px solid #ececec;box-sizing:border-box;"></div>
<span class="t" style="left:1121.0px;top:519.1px;font-size:12px;line-height:16px;color:#111;">X</span>
<span class="t" style="left:1201.4px;top:519.6px;font-size:12px;line-height:16px;color:#111;transform:scaleX(0.908);">1.00</span>
<div style="position:absolute;left:1116px;top:534.9px;width:164px;height:15.6px;background:#fff;border-bottom:1px solid #ececec;box-sizing:border-box;"></div>
<span class="t" style="left:1121.0px;top:534.7px;font-size:12px;line-height:16px;color:#111;">Y</span>
<span class="t" style="left:1201.4px;top:535.2px;font-size:12px;line-height:16px;color:#111;transform:scaleX(0.908);">1.00</span>
<div style="position:absolute;left:1116px;top:550.5px;width:164px;height:15.6px;background:#fff;border-bottom:1px solid #ececec;box-sizing:border-box;"></div>
<span class="t" style="left:1121.0px;top:550.3px;font-size:12px;line-height:16px;color:#111;">Z</span>
<span class="t" style="left:1201.4px;top:550.8px;font-size:12px;line-height:16px;color:#111;transform:scaleX(0.908);">1.00</span>
<svg style="position:absolute;left:1255px;top:450px;" width="25" height="60" viewBox="0 0 25 60"><circle cx="31" cy="30.5" r="22" fill="none" stroke="#84e488" stroke-width="5" opacity="0.8"/></svg>
<div style="position:absolute;left:1190.5px;top:503.5px;width:95px;height:17px;background:#fffff0;border:1px solid #6a6a6a;box-sizing:border-box;"></div>
<span class="t" style="left:1192.9px;top:504.7px;font-size:12px;line-height:16px;color:#111;transform:scaleX(0.935);">Plane</span>
<span class="t" style="left:1226.0px;top:504.7px;font-size:12px;line-height:16px;color:#111;transform:scaleX(0.857);">By</span>
<span class="t" style="left:1243.4px;top:504.7px;font-size:12px;line-height:16px;color:#111;transform:scaleX(1.031);">Two</span>
<span class="t" style="left:1271.0px;top:504.7px;font-size:12px;line-height:16px;color:#111;">Po</span>
<div style="position:absolute;left:-30px;top:623.5px;width:375.5px;height:95px;background:#fff;border:4.5px solid #0a0a0a;border-radius:20px;box-sizing:border-box;"></div>
<span class="t" id="fa" style="left:-192px;top:640px;width:500px;text-align:right;font-size:9.5px;line-height:16px;font-weight:bold;color:#111;direction:rtl;transform-origin:100% 50%;transform:scaleX(0.83);font-family:'DejaVu Sans','Liberation Sans',sans-serif;">دانلود رایگان آموزش نرم افزار های میکروماین، سورپک ، گوگل ارت ، جی ای اس</span>
<span class="t" style="left:-0.6px;top:667.7px;font-size:12px;line-height:16px;color:#111;font-weight:bold;transform:scaleX(0.965);">lownload free learn soft </span>
<span class="t" style="left:131.4px;top:667.7px;font-size:12px;line-height:16px;color:#b070c4;font-weight:bold;">miromine</span>
<span class="t" style="left:185.0px;top:667.7px;font-size:12px;line-height:16px;color:#111;font-weight:bold;">&amp;</span>
<span class="t" style="left:193.9px;top:667.7px;font-size:12px;line-height:16px;color:#5c6cb0;font-weight:bold;">surpac</span>
<span class="t" style="left:232.5px;top:667.7px;font-size:12px;line-height:16px;color:#111;font-weight:bold;">&amp;</span>
<span class="t" style="left:241.4px;top:667.7px;font-size:12px;line-height:16px;color:#4cae84;font-weight:bold;transform:scaleX(0.962);">google eart</span>
<span class="t" style="left:303.0px;top:667.7px;font-size:12px;line-height:16px;color:#111;font-weight:bold;transform:scaleX(1.062);">h&amp;</span>
<span class="t" style="left:319.4px;top:667.7px;font-size:12px;line-height:16px;color:#c44468;font-weight:bold;transform:scaleX(0.954);">GIS</span>
<span class="t" style="left:-0.1px;top:690.7px;font-size:12px;line-height:16px;color:#cc3c44;font-weight:bold;transform:scaleX(1.019);">@surpac1399</span>
<span class="t" style="left:154.9px;top:692.7px;font-size:12px;line-height:16px;color:#111;font-weight:bold;transform:scaleX(0.978);">www.gozali.blogfa.com</span>
<svg style="position:absolute;left:13.0px;top:48.0px;overflow:visible" width="20.0" height="20.0" viewBox="-10.0 -10.0 20 20"><path d="M-7.5 -3 h4.5 l1 1.5 h6 v2 h-7 l-4.5 6 z" fill="#4a5020" /><path d="M-7 6 l4 -6 h10.5 l-4 6 z" fill="#8a9a3a" /><path d="M-7 6 l4 -6 h10.5 l-4 6 z" stroke="#2a3010" stroke-width="1" fill="none" /><path d="M1 -5 q3 -3 6 0" stroke="#222" stroke-width="1.2" fill="none" /><path d="M8.5 -6 l-0.5 3.5 l-3 -1.5 z" fill="#222" /></svg>
<svg style="position:absolute;left:35.0px;top:48.0px;overflow:visible" width="20.0" height="20.0" viewBox="-10.0 -10.0 20 20"><path d="M-7 -6.5 h13 l1 1 v12 h-14 z" fill="#1c2010" /><path d="M-4 -6 h8 v5 h-8 z" fill="#9aa060" /><path d="M-4.5 2 h9 v4.5 h-9 z" fill="#0a0a0a" /><path d="M1.5 3 h2 v3 h-2 z" fill="#d8d8d8" /></svg>
<svg style="position:absolute;left:64.0px;top:48.0px;overflow:visible" width="20.0" height="20.0" viewBox="-10.0 -10.0 20 20"><path d="M-2.5 -7 L1.5 2 M2.5 -7 L-1.5 2" stroke="#a8a8a8" stroke-width="1.2" fill="none" /><circle cx="-2.5" cy="4.5" r="2.2" fill="none" stroke="#a8a8a8" stroke-width="1.2"/><circle cx="2.5" cy="4.5" r="2.2" fill="none" stroke="#a8a8a8" stroke-width="1.2"/></svg>
<svg style="position:absolute;left:93.0px;top:48.0px;overflow:visible" width="20.0" height="20.0" viewBox="-10.0 -10.0 20 20"><path d="M-4 -7 h8 l1 4 h-10 z" fill="#e8e8e8" /><path d="M-4 -7 h8 l1 4 h-10 z" stroke="#333" stroke-width="1" fill="none" /><path d="M-7.5 -3 h15 v7 h-15 z" fill="#4a4a4a" /><path d="M-6.5 -1.5 h13 v2 h-13 z" fill="#d0d0d0" /><path d="M-5.5 3 h11 v4 h-11 z" fill="#f0f0f0" /><path d="M-5.5 3 h11 v4 h-11 z" stroke="#333" stroke-width="1" fill="none" /></svg>
<svg style="position:absolute;left:137.5px;top:48.0px;overflow:visible" width="20.0" height="20.0" viewBox="-10.0 -10.0 20 20"><path d="M-1.5 -5 h9 l-3.3 4 v4 l-2.2 -0.6 v-3.4 z" fill="#d4d4d4" /><path d="M-2.5 -5.3 h11 M-1.5 -5 l3.5 4 v3.6 M7.5 -5 l-3.3 4 v4.4" stroke="#3a3a3a" stroke-width="1.3" fill="none" /><circle cx="-6" cy="4.5" r="1.5" fill="#111"/></svg>
<svg style="position:absolute;left:159.0px;top:48.0px;overflow:visible" width="20.0" height="20.0" viewBox="-10.0 -10.0 20 20"><path d="M-1.5 -5 h9 l-3.3 4 v4 l-2.2 -0.6 v-3.4 z" fill="#d4d4d4" /><path d="M-2.5 -5.3 h11 M-1.5 -5 l3.5 4 v3.6 M7.5 -5 l-3.3 4 v4.4" stroke="#3a3a3a" stroke-width="1.3" fill="none" /><path d="M-7 -2 L1 6" stroke="#111" stroke-width="1.3" fill="none" /><circle cx="-7" cy="-2" r="1.5" fill="#111"/><circle cx="1" cy="6" r="1.5" fill="#111"/></svg>
<svg style="position:absolute;left:180.0px;top:48.0px;overflow:visible" width="20.0" height="20.0" viewBox="-10.0 -10.0 20 20"><path d="M-1.5 -5 h9 l-3.3 4 v4 l-2.2 -0.6 v-3.4 z" fill="#d4d4d4" /><path d="M-2.5 -5.3 h11 M-1.5 -5 l3.5 4 v3.6 M7.5 -5 l-3.3 4 v4.4" stroke="#3a3a3a" stroke-width="1.3" fill="none" /><path d="M-6 -1 L1.5 6.5" stroke="#111" stroke-width="1.3" fill="none" /><circle cx="-7" cy="-2" r="1.6" fill="#fff" stroke="#111"/><path d="M2.5 7.5 l-4 -1 l3 -3 z" fill="#111" /></svg>
<svg style="position:absolute;left:201.0px;top:48.0px;overflow:visible" width="20.0" height="20.0" viewBox="-10.0 -10.0 20 20"><path d="M-1.5 -5 h9 l-3.3 4 v4 l-2.2 -0.6 v-3.4 z" fill="#d4d4d4" /><path d="M-2.5 -5.3 h11 M-1.5 -5 l3.5 4 v3.6 M7.5 -5 l-3.3 4 v4.4" stroke="#3a3a3a" stroke-width="1.3" fill="none" /><path d="M-7.5 -2.5 h9 v9 h-9 z" fill="#fff" /><path d="M-7.5 -2.5 h9 v9 h-9 z M-7.5 0.5 h9 M-7.5 3.5 h9 M-3.5 -2.5 v9" stroke="#111" stroke-width="1.3" fill="none" /></svg>
<svg style="position:absolute;left:222.5px;top:48.0px;overflow:visible" width="20.0" height="20.0" viewBox="-10.0 -10.0 20 20"><path d="M-1.5 -5 h9 l-3.3 4 v4 l-2.2 -0.6 v-3.4 z" fill="#d4d4d4" /><path d="M-2.5 -5.3 h11 M-1.5 -5 l3.5 4 v3.6 M7.5 -5 l-3.3 4 v4.4" stroke="#3a3a3a" stroke-width="1.3" fill="none" /><path d="M-7.5 -2.5 h9 v9 h-9 z" fill="#fff" /><path d="M-7.5 -2.5 h9 v9 h-9 z M-7.5 2 h5 v4.5" stroke="#111" stroke-width="1.3" fill="none" /></svg>
<svg style="position:absolute;left:244.5px;top:48.0px;overflow:visible" width="20.0" height="20.0" viewBox="-10.0 -10.0 20 20"><path d="M-1 -5.5 h9.5 M7.5 -5 l-3.3 4 v3" stroke="#444" stroke-width="1.3" fill="none" /><ellipse cx="-1" cy="3.5" rx="6" ry="3.3" fill="none" stroke="#111" stroke-width="1.3"/></svg>
<svg style="position:absolute;left:288.5px;top:48.0px;overflow:visible" width="20.0" height="20.0" viewBox="-10.0 -10.0 20 20"><path d="M-4.2 -6.8 L-0.8000000000000003 -3.4 L-4.2 0.0 L-7.6 -3.4 Z" fill="#9ab070" stroke="#1a2a0a" stroke-width="1.4" stroke-linejoin="round"/><circle cx="3.4" cy="-4.6" r="1.3" fill="#111"/><circle cx="0.9" cy="1.6" r="1.3" fill="#111"/><circle cx="-4.1" cy="5.6" r="1.3" fill="#111"/><circle cx="5.3" cy="5.6" r="1.3" fill="#111"/><circle cx="6" cy="-0.5" r="1" fill="#111"/></svg>
<svg style="position:absolute;left:309.9px;top:48.0px;overflow:visible" width="20.0" height="20.0" viewBox="-10.0 -10.0 20 20"><path d="M-4.2 -6.8 L-0.8000000000000003 -3.4 L-4.2 0.0 L-7.6 -3.4 Z" fill="#9ab070" stroke="#1a2a0a" stroke-width="1.4" stroke-linejoin="round"/><path d="M-3 5.4 L5.7 -4.6" stroke="#111" stroke-width="1.3" fill="none" /><circle cx="-3.2" cy="5.6" r="1.5" fill="#111"/><circle cx="5.9" cy="-4.8" r="1.4" fill="#111"/></svg>
<svg style="position:absolute;left:331.3px;top:48.0px;overflow:visible" width="20.0" height="20.0" viewBox="-10.0 -10.0 20 20"><path d="M-4.2 -6.8 L-0.8000000000000003 -3.4 L-4.2 0.0 L-7.6 -3.4 Z" fill="#9ab070" stroke="#1a2a0a" stroke-width="1.4" stroke-linejoin="round"/><path d="M-2.5 4.5 L5.5 -3.5" stroke="#111" stroke-width="1.3" fill="none" /><circle cx="6.3" cy="-4.2" r="1.7" fill="#556" stroke="#111"/><path d="M-4.3 6.5 l1 -4.6 l3.4 3.4 z" fill="#111" /></svg>
<svg style="position:absolute;left:352.7px;top:48.0px;overflow:visible" width="20.0" height="20.0" viewBox="-10.0 -10.0 20 20"><path d="M-4.2 -6.8 L-0.8000000000000003 -3.4 L-4.2 0.0 L-7.6 -3.4 Z" fill="#9ab070" stroke="#1a2a0a" stroke-width="1.4" stroke-linejoin="round"/><path d="M-1.4 -1 h8.7 v9 h-8.7 z" fill="#fff" /><path d="M-1.4 -1 h8.7 v9 h-8.7 z M-1.4 3.5 h4.5 v4.5" stroke="#111" stroke-width="1.4" fill="none" /><circle cx="-1" cy="-2" r="1.1" fill="#111"/></svg>
<svg style="position:absolute;left:374.1px;top:48.0px;overflow:visible" width="20.0" height="20.0" viewBox="-10.0 -10.0 20 20"><path d="M-4.2 -6.8 L-0.8000000000000003 -3.4 L-4.2 0.0 L-7.6 -3.4 Z" fill="#9ab070" stroke="#1a2a0a" stroke-width="1.4" stroke-linejoin="round"/><path d="M-7 8 L3.5 -1.5 h4.5 v9.5 z" fill="#222" /><path d="M-2.5 5.5 h10.5 M1 2.5 h7 M1.5 -1 v9 M4.8 -1.5 v9.5" stroke="#fff" stroke-width="0.9" fill="none" /></svg>
<svg style="position:absolute;left:395.5px;top:48.0px;overflow:visible" width="20.0" height="20.0" viewBox="-10.0 -10.0 20 20"><path d="M-4.2 -6.8 L-0.8000000000000003 -3.4 L-4.2 0.0 L-7.6 -3.4 Z" fill="#9ab070" stroke="#1a2a0a" stroke-width="1.4" stroke-linejoin="round"/><path d="M-5 0 q3 -2 6.5 0 t6.5 -1.5 v7 q-4 2.5 -6.5 1 t-6.5 1.5 z" fill="#fff" /><path d="M-5 0 q3 -2 6.5 0 t6.5 -1.5 v7 q-4 2.5 -6.5 1 t-6.5 1.5 z M-5 3 q3 -2 6.5 0 t6.5 -1.5" stroke="#111" stroke-width="1.2" fill="none" /></svg>
<svg style="position:absolute;left:416.9px;top:48.0px;overflow:visible" width="20.0" height="20.0" viewBox="-10.0 -10.0 20 20"><path d="M-4.2 -6.8 L-0.8000000000000003 -3.4 L-4.2 0.0 L-7.6 -3.4 Z" fill="#9ab070" stroke="#1a2a0a" stroke-width="1.4" stroke-linejoin="round"/><ellipse cx="1.9" cy="2.7" rx="6.2" ry="3.9" fill="#fff" stroke="#111" stroke-width="1.3"/><path d="M-3.5 -1.5 L-2 1" stroke="#111" stroke-width="1.2" fill="none" /></svg>
<svg style="position:absolute;left:459.0px;top:49.0px;overflow:visible" width="20.0" height="20.0" viewBox="-10.0 -10.0 20 20"><path d="M-6 -1.5 q3.5 -6.5 8 -1" stroke="#a03040" stroke-width="1.3" fill="none" /><path d="M3.5 0 l-3.8 -0.6 l3.2 -3.2 z" fill="#602030" /><circle cx="4.5" cy="2.5" r="1.5" fill="#111"/><path d="M4.5 -6 v14" stroke="#9ab8d8" stroke-width="0.8" fill="none" /></svg>
<svg style="position:absolute;left:482.5px;top:49.0px;overflow:visible" width="20.0" height="20.0" viewBox="-10.0 -10.0 20 20"><path d="M-6 -2 q4 -5.5 8 -1" stroke="#111" stroke-width="1.3" fill="none" /><path d="M3.5 0 l-3.8 -0.6 l3.2 -3.2 z" fill="#111" /><path d="M-5 1.5 h5" stroke="#111" stroke-width="1" fill="none" /><path d="M-7 5 h13" stroke="#111" stroke-width="2" fill="none" /></svg>
<svg style="position:absolute;left:502.5px;top:49.0px;overflow:visible" width="20.0" height="20.0" viewBox="-10.0 -10.0 20 20"><path d="M-6 -2 q4 -5.5 8 -1" stroke="#444" stroke-width="1.3" fill="none" /><path d="M3 0 l-3.8 -0.6 l3.2 -3.2 z" fill="#333" /><path d="M-8 4.5 h17" stroke="#333" stroke-width="1.6" fill="none" stroke-dasharray="1.5 1"/><path d="M4.5 -9 v17" stroke="#333" stroke-width="1" fill="none" /></svg>
<svg style="position:absolute;left:526.0px;top:49.0px;overflow:visible" width="20.0" height="20.0" viewBox="-10.0 -10.0 20 20"><path d="M-6.5 6 h12 v-11.5 z M-6.5 0.5 L4 6 M0.5 3 h2.5 v-3" stroke="#111" stroke-width="1.4" fill="none" /></svg>
<svg style="position:absolute;left:554.5px;top:49.0px;overflow:visible" width="20.0" height="20.0" viewBox="-10.0 -10.0 20 20"><path d="M-7 -2.5 q3.5 -6 7.5 -1" stroke="#111" stroke-width="1.3" fill="none" stroke-dasharray="2.5 1.5"/><path d="M2.5 0 l-3.8 -0.6 l3.2 -3.2 z" fill="#111" /><circle cx="5" cy="-0.5" r="1.6" fill="#111"/><circle cx="-2.5" cy="4.5" r="1.6" fill="#111"/></svg>
<svg style="position:absolute;left:576.0px;top:49.0px;overflow:visible" width="20.0" height="20.0" viewBox="-10.0 -10.0 20 20"><path d="M-5 5 L5 -6" stroke="#111" stroke-width="1.3" fill="none" /><circle cx="-5.5" cy="5.5" r="1.6" fill="#111"/><circle cx="5.5" cy="-6.5" r="1.6" fill="#111"/><path d="M-6.5 -3.5 q3 -4 6.5 -1.5" stroke="#111" stroke-width="1.3" fill="none" /></svg>
<svg style="position:absolute;left:597.0px;top:49.0px;overflow:visible" width="20.0" height="20.0" viewBox="-10.0 -10.0 20 20"><path d="M-6 5.5 h11.5 v-10 z M-6 5.5 v-8 h6" stroke="#111" stroke-width="1.4" fill="none" /><path d="M-5 -5.5 q2.5 -2.5 5 0" stroke="#111" stroke-width="1.2" fill="none" /></svg>
<svg style="position:absolute;left:619.0px;top:49.0px;overflow:visible" width="20.0" height="20.0" viewBox="-10.0 -10.0 20 20"><path d="M-6 2 l2.5 3.5 L4.5 -5" stroke="#111" stroke-width="1.2" fill="none" /><circle cx="5.5" cy="-6" r="1.9" fill="#fff" stroke="#111" stroke-width="1.1"/><path d="M-6.5 -3 q3.5 -5 7 -1" stroke="#111" stroke-width="1.2" fill="none" /></svg>
<svg style="position:absolute;left:641.0px;top:49.0px;overflow:visible" width="20.0" height="20.0" viewBox="-10.0 -10.0 20 20"><ellipse cx="0" cy="2.5" rx="6.5" ry="3.8" fill="none" stroke="#111" stroke-width="1.3"/><path d="M-5.5 -4 q4 -4 7 0.5" stroke="#111" stroke-width="1.3" fill="none" /><path d="M3 -1.5 l-3.5 0.2 l2.2 -3 z" fill="#111" /></svg>
<svg style="position:absolute;left:670.5px;top:49.0px;overflow:visible" width="20.0" height="20.0" viewBox="-10.0 -10.0 20 20"><circle cx="-3.5" cy="-5" r="1.6" fill="#111"/><path d="M-3 -4.5 L0 -1.5" stroke="#111" stroke-width="1" fill="none" /><path d="M-0.5 -2.5 v7 l1.7 -1.7 l1.4 2.8 l1.4 -0.7 l-1.4 -2.7 h2.4 z" fill="#000" /></svg>
<svg style="position:absolute;left:692.0px;top:49.0px;overflow:visible" width="20.0" height="20.0" viewBox="-10.0 -10.0 20 20"><path d="M-7 4.5 L4 -7" stroke="#111" stroke-width="1.3" fill="none" /><circle cx="-7" cy="4.5" r="1.5" fill="#111"/><circle cx="4" cy="-7" r="1.5" fill="#111"/><path d="M0.5 -2 v7 l1.7 -1.7 l1.4 2.8 l1.4 -0.7 l-1.4 -2.7 h2.4 z" fill="#000" /></svg>
<svg style="position:absolute;left:712.5px;top:49.0px;overflow:visible" width="20.0" height="20.0" viewBox="-10.0 -10.0 20 20"><path d="M-7 2 l3 3.5 L4 -5.5" stroke="#2a4a6a" stroke-width="1.2" fill="none" /><circle cx="5" cy="-6.5" r="1.9" fill="#fff" stroke="#111" stroke-width="1.1"/><path d="M1.5 -1.5 v7 l1.7 -1.7 l1.4 2.8 l1.4 -0.7 l-1.4 -2.7 h2.4 z" fill="#000" /></svg>
<svg style="position:absolute;left:734.0px;top:49.0px;overflow:visible" width="20.0" height="20.0" viewBox="-10.0 -10.0 20 20"><path d="M-7.5 4 h12 v-10.5 z M-7.5 4 v-5.5 h6" stroke="#111" stroke-width="1.4" fill="none" /><path d="M2.5 0.5 v7 l1.7 -1.7 l1.4 2.8 l1.4 -0.7 l-1.4 -2.7 h2.4 z" fill="#000" /></svg>
<svg style="position:absolute;left:755.0px;top:49.0px;overflow:visible" width="20.0" height="20.0" viewBox="-10.0 -10.0 20 20"><path d="M-8 1.5 L-3 -7 h10 l-1.5 8.5 z" fill="#222" /><path d="M-6 -1.5 h12.5 M-4.5 -4.5 h11.5 M-2.5 -7 l-2 8.5 M1 -7 l-1 8.5 M4 -7 l-0.5 8.5" stroke="#fff" stroke-width="0.8" fill="none" /><path d="M2.5 0.5 v7 l1.7 -1.7 l1.4 2.8 l1.4 -0.7 l-1.4 -2.7 h2.4 z" fill="#000" /></svg>
<svg style="position:absolute;left:777.5px;top:49.0px;overflow:visible" width="20.0" height="20.0" viewBox="-10.0 -10.0 20 20"><ellipse cx="-0.5" cy="-2" rx="6.5" ry="3.8" fill="#fff" stroke="#111" stroke-width="1.4"/><path d="M1.5 -2 v7 l1.7 -1.7 l1.4 2.8 l1.4 -0.7 l-1.4 -2.7 h2.4 z" fill="#000" /></svg>
<svg style="position:absolute;left:820.5px;top:48.0px;overflow:visible" width="20.0" height="20.0" viewBox="-10.0 -10.0 20 20"><text x="-9" y="5" font-family="Liberation Sans,sans-serif" font-size="14" fill="#ece850">S</text><circle cx="3.5" cy="1.5" r="2.8" fill="#c81010"/></svg>
<svg style="position:absolute;left:844.0px;top:48.0px;overflow:visible" width="20.0" height="20.0" viewBox="-10.0 -10.0 20 20"><text x="-9" y="5" font-family="Liberation Sans,sans-serif" font-size="14" fill="#c4c4c4">S</text><path d="M-1.5 -2 h2.5 v7 h-2.5 z M2.5 -2 h2.5 v7 h-2.5 z" fill="#6a6a6a" /></svg>
<svg style="position:absolute;left:872.0px;top:48.0px;overflow:visible" width="20.0" height="20.0" viewBox="-10.0 -10.0 20 20"><text x="-9" y="5" font-family="Liberation Sans,sans-serif" font-size="14" fill="#d0d0d0">S</text><path d="M-1 -2 h7 v7 h-7 z" fill="#8c8c8c" /></svg>
<svg style="position:absolute;left:894.0px;top:48.0px;overflow:visible" width="20.0" height="20.0" viewBox="-10.0 -10.0 20 20"><text x="-9" y="5" font-family="Liberation Sans,sans-serif" font-size="14" fill="#ece850">S</text><path d="M0.5 -5 L7 0.5 L0.5 6 z" fill="#000" /></svg>
<svg style="position:absolute;left:1186.5px;top:48.0px;overflow:visible" width="20.0" height="20.0" viewBox="-10.0 -10.0 20 20"><path d="M-6.5 -6 h13 v12 h-13 z" fill="#fff" /><path d="M-6.5 -6 h13 v12 h-13 z M-3.2 -6 v12 M0 -6 v12 M3.2 -6 v12 M-6.5 -2 h13 M-6.5 2 h13" stroke="#181848" stroke-width="1.3" fill="none" /></svg>
<svg style="position:absolute;left:1207.0px;top:48.0px;overflow:visible" width="20.0" height="20.0" viewBox="-10.0 -10.0 20 20"><path d="M-7 -4.5 h11 v11 h-11 z" fill="#f4f4e0" /><path d="M-7 -4.5 h11 v11 h-11 z M-3.5 -4.5 v11" stroke="#222" stroke-width="1.3" fill="none" /><path d="M-5.5 -2 v1 M-5.5 1 v1 M-5.5 4 v1" stroke="#6a8a2a" stroke-width="1.5" fill="none" /><path d="M0 3.5 L7 -6.5" stroke="#111" stroke-width="2.4" fill="none" /><circle cx="7.5" cy="-7" r="1.2" fill="#111"/></svg>
<svg style="position:absolute;left:1229.5px;top:48.0px;overflow:visible" width="20.0" height="20.0" viewBox="-10.0 -10.0 20 20"><path d="M-2 -7 h6.5 v6 h-6.5 z" fill="#e8d868" /><path d="M-2 -7 h6.5 v6 h-6.5 z" stroke="#5a5020" stroke-width="1" fill="none" /><path d="M-5.5 3 L-1 -2.5" stroke="#1828a8" stroke-width="5" fill="none" stroke-linecap="round"/><path d="M0 4.5 L5 -0.5" stroke="#38c8d0" stroke-width="5" fill="none" stroke-linecap="round"/><path d="M-0.3 4.8 L0.3 4.2" stroke="#a0f0f0" stroke-width="5" fill="none" stroke-linecap="round"/></svg>
<svg style="position:absolute;left:5.5px;top:73.0px;overflow:visible" width="20.0" height="20.0" viewBox="-10.0 -10.0 20 20"><path d="M-5 5.5 L5 -5" stroke="#111" stroke-width="1.3" fill="none" /><circle cx="-5" cy="5.5" r="1.5" fill="#111"/><circle cx="5.5" cy="-5.5" r="1.5" fill="#111"/></svg>
<svg style="position:absolute;left:27.5px;top:73.0px;overflow:visible" width="20.0" height="20.0" viewBox="-10.0 -10.0 20 20"><circle cx="0" cy="0" r="5.8" fill="none" stroke="#111" stroke-width="1.3"/><circle cx="0" cy="-6" r="1.3" fill="#111"/><circle cx="6" cy="0" r="1.3" fill="#111"/><circle cx="0" cy="6" r="1.3" fill="#111"/><circle cx="-6" cy="0" r="1.3" fill="#111"/></svg>
<svg style="position:absolute;left:56.0px;top:73.0px;overflow:visible" width="20.0" height="20.0" viewBox="-10.0 -10.0 20 20"><path d="M-2.5 -3 h-4.5 v7.5 h13.5 v-7.5 h-3.5" stroke="#111" stroke-width="1.4" fill="none" /><circle cx="-2" cy="-3.5" r="1.3" fill="#111"/><circle cx="2.5" cy="-3.5" r="1.3" fill="#111"/></svg>
<svg style="position:absolute;left:77.5px;top:73.0px;overflow:visible" width="20.0" height="20.0" viewBox="-10.0 -10.0 20 20"><path d="M-2.5 -3 h-4.5 v7.5 h13.5 v-7.5 h-3.5" stroke="#111" stroke-width="1.4" fill="none" /><circle cx="-2" cy="-3.5" r="1.3" fill="#111"/><circle cx="2.5" cy="-3.5" r="1.3" fill="#111"/><path d="M2 0 l-4 4.5 h2.5 l-2 4 l5 -5.5 h-2.5 l2 -3 z" fill="#e8d020" /></svg>
<svg style="position:absolute;left:99.0px;top:73.0px;overflow:visible" width="20.0" height="20.0" viewBox="-10.0 -10.0 20 20"><path d="M-2.5 -3 h-4.5 v7.5 h13.5 v-7.5 h-3.5" stroke="#111" stroke-width="1.4" fill="none" /><path d="M-2.5 -3 h3" stroke="#111" stroke-width="1.4" fill="none" /><path d="M3.5 -3 l-3.5 -2.8 v5.6 z" fill="#111" /></svg>
<svg style="position:absolute;left:120.5px;top:73.0px;overflow:visible" width="20.0" height="20.0" viewBox="-10.0 -10.0 20 20"><path d="M-2.5 -3 h-4.5 v7.5 h13.5 v-7.5 h-3.5" stroke="#111" stroke-width="1.4" fill="none" /><path d="M-2.5 -3 h3" stroke="#111" stroke-width="1.4" fill="none" /><path d="M3.5 -3 l-3.5 -2.8 v5.6 z" fill="#111" /><path d="M2 0 l-4 4.5 h2.5 l-2 4 l5 -5.5 h-2.5 l2 -3 z" fill="#e8d020" /></svg>
<svg style="position:absolute;left:150.0px;top:73.0px;overflow:visible" width="20.0" height="20.0" viewBox="-10.0 -10.0 20 20"><path d="M-7 3.5 h14" stroke="#111" stroke-width="1.4" fill="none" /><path d="M-6 3 L0 -3 L6 3" stroke="#111" stroke-width="1" fill="none" stroke-dasharray="1.5 1.2"/><circle cx="0" cy="-4" r="1.1" fill="#111"/><path d="M-8 3.5 l3 -2 v4 z M8 3.5 l-3 -2 v4 z" fill="#111" /></svg>
<svg style="position:absolute;left:171.0px;top:73.0px;overflow:visible" width="20.0" height="20.0" viewBox="-10.0 -10.0 20 20"><path d="M-7 0.5 h5 M2 0.5 h5.5" stroke="#111" stroke-width="1.4" fill="none" /><path d="M-2.5 6.5 L4 -7" stroke="#111" stroke-width="1.1" fill="none" stroke-dasharray="3 1.5"/><circle cx="0" cy="0.5" r="1.3" fill="#111"/></svg>
<svg style="position:absolute;left:193.0px;top:73.0px;overflow:visible" width="20.0" height="20.0" viewBox="-10.0 -10.0 20 20"><path d="M-7 5 h14" stroke="#111" stroke-width="1.4" fill="none" /><path d="M-5 -4.5 l2.4 2.4 M-2.6 -4.5 l-2.4 2.4 M3 -4.5 l2.4 2.4 M5.4 -4.5 l-2.4 2.4" stroke="#111" stroke-width="1" fill="none" /><path d="M-3.8 -1 v6 M4.2 -1 v6" stroke="#111" stroke-width="1" fill="none" stroke-dasharray="1.2 1.2"/><path d="M-8 5 l3 -2 v4 z M8 5 l-3 -2 v4 z" fill="#111" /></svg>
<svg style="position:absolute;left:221.0px;top:73.0px;overflow:visible" width="20.0" height="20.0" viewBox="-10.0 -10.0 20 20"><path d="M-3.5 -3 q7 -4 8 1 q0 2.5 -2.5 3.5" stroke="#111" stroke-width="1.5" fill="none" /><path d="M-6.5 -5.5 l5 0.5 l-3.5 4 z" fill="#111" /><circle cx="-5.5" cy="5" r="1.5" fill="#111"/><circle cx="5.5" cy="5" r="1.5" fill="#111"/><path d="M-3 5 h6" stroke="#111" stroke-width="1.2" fill="none" stroke-dasharray="1.2 1.5"/></svg>
<svg style="position:absolute;left:244.0px;top:73.0px;overflow:visible" width="20.0" height="20.0" viewBox="-10.0 -10.0 20 20"><path d="M0 -5 v10 M-5 0 h10" stroke="#111" stroke-width="1.3" fill="none" /><path d="M0 -8 l2.6 3 h-5.2 z M0 8 l2.6 -3 h-5.2 z M-8 0 l3 -2.6 v5.2 z M8 0 l-3 -2.6 v5.2 z" fill="#111" /><circle cx="0" cy="0" r="1.3" fill="#111"/></svg>
<svg style="position:absolute;left:265.0px;top:73.0px;overflow:visible" width="20.0" height="20.0" viewBox="-10.0 -10.0 20 20"><path d="M0 -5 v10 M-5 0 h10" stroke="#111" stroke-width="1.3" fill="none" /><path d="M0 -8 l2.6 3 h-5.2 z M0 8 l2.6 -3 h-5.2 z M-8 0 l3 -2.6 v5.2 z M8 0 l-3 -2.6 v5.2 z" fill="#111" /><circle cx="0" cy="0" r="1.3" fill="#111"/><path d="M-3 4 L4 -6" stroke="#111" stroke-width="1" fill="none" /><circle cx="0" cy="0" r="1.6" fill="#fff" stroke="#111" stroke-width="0.9"/></svg>
<svg style="position:absolute;left:286.0px;top:73.0px;overflow:visible" width="20.0" height="20.0" viewBox="-10.0 -10.0 20 20"><path d="M-6.5 -7 h13 M-5 -4.8 h11 M-6 -2.6 h12" stroke="#3c9a3c" stroke-width="1.2" fill="none" /><path d="M0 -0.5 l3.2 3.5 h-2 v2 h-2.4 v-2 h-2 z" fill="#111" /><path d="M-7 7 h14" stroke="#111" stroke-width="2" fill="none" /></svg>
<svg style="position:absolute;left:307.5px;top:73.0px;overflow:visible" width="20.0" height="20.0" viewBox="-10.0 -10.0 20 20"><path d="M-7 -6 h14" stroke="#111" stroke-width="1.6" fill="none" stroke-dasharray="1.6 1.8"/><path d="M1.5 -3.5 h-2.5 l-0.5 2.5 q3 0 2.5 2.5 q-0.5 2 -2.5 1.5" stroke="#111" stroke-width="1.1" fill="none" /><path d="M-7.5 6 h15" stroke="#111" stroke-width="2" fill="none" /></svg>
<svg style="position:absolute;left:329.0px;top:73.0px;overflow:visible" width="20.0" height="20.0" viewBox="-10.0 -10.0 20 20"><path d="M-2.5 -5 A6 6 0 1 0 3.5 -4.5" fill="none" stroke="#111" stroke-width="2.2"/><path d="M1 -8.5 l5 3.5 l-5.5 2 z" fill="#111" /></svg>
<svg style="position:absolute;left:351.0px;top:73.0px;overflow:visible" width="20.0" height="20.0" viewBox="-10.0 -10.0 20 20"><path d="M-2.5 -1.5 h-4.5 v7 h14.5 v-7 h-4.5 M-2.5 -1.5 v-4 h5 v4" stroke="#111" stroke-width="1.5" fill="none" /></svg>
<svg style="position:absolute;left:371.0px;top:73.0px;overflow:visible" width="20.0" height="20.0" viewBox="-10.0 -10.0 20 20"><path d="M4.5 -3.5 h-11 v7.5 h11" stroke="#111" stroke-width="1.5" fill="none" /><path d="M4.5 -7 v14.5" stroke="#111" stroke-width="1.5" fill="none" /></svg>
<svg style="position:absolute;left:394.0px;top:73.0px;overflow:visible" width="20.0" height="20.0" viewBox="-10.0 -10.0 20 20"><path d="M-8 0.5 h7" stroke="#111" stroke-width="2" fill="none" /><path d="M1.5 0.5 h6.5" stroke="#111" stroke-width="1.6" fill="none" stroke-dasharray="1.6 1"/><path d="M-3 7 L3.5 -7" stroke="#111" stroke-width="1.2" fill="none" /></svg>
<svg style="position:absolute;left:414.0px;top:73.0px;overflow:visible" width="20.0" height="20.0" viewBox="-10.0 -10.0 20 20"><path d="M-5.5 6 L5.5 -6" stroke="#333" stroke-width="1.1" fill="none" stroke-dasharray="2.5 1.3"/><circle cx="-6" cy="6.5" r="1.5" fill="#555"/><circle cx="6" cy="-6.5" r="1.4" fill="#111"/></svg>
<svg style="position:absolute;left:435.0px;top:73.0px;overflow:visible" width="20.0" height="20.0" viewBox="-10.0 -10.0 20 20"><path d="M-7.5 4.5 q2 -9 7 -4 t8.5 -4.5" stroke="#111" stroke-width="1.4" fill="none" /></svg>
<svg style="position:absolute;left:458.0px;top:73.0px;overflow:visible" width="20.0" height="20.0" viewBox="-10.0 -10.0 20 20"><path d="M-4 -4 h4 v-2.8 l5.5 4.3 l-5.5 4.3 v-2.8 h-4 z" fill="#10104a" /><path d="M-5.5 5.5 h12" stroke="#111" stroke-width="1.5" fill="none" /><circle cx="-6.5" cy="5.5" r="1.4" fill="#aaa" stroke="#333" stroke-width="0.8"/></svg>
<svg style="position:absolute;left:488.5px;top:73.0px;overflow:visible" width="20.0" height="20.0" viewBox="-10.0 -10.0 20 20"><path d="M-3.5 3.5 L6 -6" stroke="#2a1a3a" stroke-width="4" fill="none" /><path d="M2.5 -2.5 L6.5 -6.5" stroke="#c8c040" stroke-width="3.6" fill="none" /><path d="M-1.5 1.5 L0.5 -0.5" stroke="#d8b8d8" stroke-width="2.6" fill="none" /><circle cx="-7" cy="5.5" r="1.3" fill="#111"/></svg>
<svg style="position:absolute;left:509.0px;top:73.0px;overflow:visible" width="20.0" height="20.0" viewBox="-10.0 -10.0 20 20"><path d="M-7 1.5 L-0.5 -5.5 q2 -1.5 4 0 l2 1.8 q0.5 1.2 -0.5 2.5 L-0.5 6 h-3.5 z M-0.5 6 h7.5" stroke="#111" stroke-width="1.3" fill="none" /><path d="M-7 1.5 L-0.5 -5.5 q2 -1.5 4 0 l2 1.8 q0.5 1.2 -0.5 2.5 L-0.5 6 h-3.5 z" fill="#fff" opacity="0.9"/><path d="M-7 1.5 L-0.5 -5.5 q2 -1.5 4 0 l2 1.8 q0.5 1.2 -0.5 2.5 L-0.5 6 h-3.5 z M-0.5 6 h7.5 M-3 -2.8 L2 2.7" stroke="#111" stroke-width="1.2" fill="none" /></svg>
<svg style="position:absolute;left:9.9px;top:123.4px;overflow:visible" width="17.2" height="17.2" viewBox="-10.0 -10.0 20 20"><path d="M-5.5 -7.5 h8 l3 3 v11 h-11 z" fill="#fff" /><path d="M-5.5 -7.5 h8 l3 3 v11 h-11 z" stroke="#555" stroke-width="1.1" fill="none" /><path d="M-2.5 -1 q0 -3.5 3.5 -3.5 M2.5 2 q0 3.5 -3.5 3.5" stroke="#1a8a2a" stroke-width="1.8" fill="none" /><path d="M2.5 -6 l0 4.5 l-3.5 -1.5 z M-2.5 7 l0 -4.5 l3.5 1.5 z" fill="#1a8a2a" /><path d="M-6 8 h12" stroke="#222" stroke-width="1.2" fill="none" /></svg>
<svg style="position:absolute;left:38.9px;top:123.4px;overflow:visible" width="17.2" height="17.2" viewBox="-10.0 -10.0 20 20"><path d="M-8.5 -4.5 l4.5 3.5 l-4.5 3.5 z" fill="#0a0a3a" /><path d="M-3.5 -6.5 h7.5 l3 3 v10.5 h-10.5 z" fill="#fff" /><path d="M-3.5 -6.5 h7.5 l3 3 v10.5 h-10.5 z" stroke="#222" stroke-width="1.1" fill="none" /><circle cx="-3.5" cy="-6.5" r="2" fill="#e8e060"/></svg>
<svg style="position:absolute;left:60.4px;top:123.4px;overflow:visible" width="17.2" height="17.2" viewBox="-10.0 -10.0 20 20"><path d="M-8.5 -5.5 l4.5 3.5 l-4.5 3.5 z" fill="#0a0a3a" /><path d="M-3.5 -7.5 h5 l3 3 v7 h-8 z" fill="#e8e8f0" /><path d="M-3.5 -7.5 h5 l3 3 v7 h-8 z" stroke="#445" stroke-width="1.1" fill="none" /><path d="M0 -4 h5 l3 3 v8 h-8 z" fill="#fff" /><path d="M0 -4 h5 l3 3 v8 h-8 z" stroke="#223" stroke-width="1.1" fill="none" /><path d="M2 0 h4 M2 2.5 h4 M2 5 h4" stroke="#667" stroke-width="0.8" fill="none" /></svg>
<svg style="position:absolute;left:81.9px;top:123.4px;overflow:visible" width="17.2" height="17.2" viewBox="-10.0 -10.0 20 20"><path d="M-9 -5.5 l4.5 3.5 l-4.5 3.5 z" fill="#0a0a3a" /><path d="M-4.5 -7.5 h5 l3 3 v9 h-8 z" fill="#fff" /><path d="M-4.5 -7.5 h5 l3 3 v9 h-8 z" stroke="#112" stroke-width="1.1" fill="none" /><path d="M0.5 -5 h4 l3 3 v8 h-7 z" fill="#fff" /><path d="M0.5 -5 h4 l3 3 v8 h-7 z" stroke="#112" stroke-width="1.1" fill="none" /><path d="M-1 -3 v8 M5 -2 v8" stroke="#001" stroke-width="1.4" fill="none" /><path d="M-1 7 l-2.5 -3 h5 z M5 8 l-2.5 -3 h5 z" fill="#001" /></svg>
<svg style="position:absolute;left:110.9px;top:123.4px;overflow:visible" width="17.2" height="17.2" viewBox="-10.0 -10.0 20 20"><path d="M-5.5 -7.5 h10 v9 h-10 z" fill="#e4e4e4" /><path d="M-5.5 -7.5 h10 v9 h-10 z" stroke="#b0b0b0" stroke-width="1" fill="none" /><circle cx="-0.5" cy="-3.5" r="2.3" fill="#f8f8f8" stroke="#b4b4b4"/><path d="M-6 1.5 h11 v5.5 h-11 z" fill="#b8b8b8" /><path d="M7 -6 l3.5 3 l-3.5 3 z" fill="#c4c4c4" /></svg>
<svg style="position:absolute;left:-7.6px;top:146.4px;overflow:visible" width="17.2" height="17.2" viewBox="-10.0 -10.0 20 20"><path d="M-6 -6 h8 l3 4 v8 h-11 z" fill="#dedede" /><path d="M-6 -6 h8 l3 4 v8 h-11 z" stroke="#c8c8c8" stroke-width="1.2" fill="none" /></svg>
<svg style="position:absolute;left:14.9px;top:146.4px;overflow:visible" width="17.2" height="17.2" viewBox="-10.0 -10.0 20 20"><path d="M-5 1 l3 4 L5.5 -5.5" stroke="#c8c8c8" stroke-width="2" fill="none" /></svg>
<svg style="position:absolute;left:36.9px;top:146.4px;overflow:visible" width="17.2" height="17.2" viewBox="-10.0 -10.0 20 20"><path d="M-1 -2 q5 -5 6 0.5 q0 3 -3 4.5" stroke="#c8c8c8" stroke-width="1.5" fill="none" /><path d="M-6 -6 l5.5 0.5 l-4 4.5 z" fill="#c8c8c8" /><path d="M-1 4 l2 2.5 l2 -2.5" stroke="#c8c8c8" stroke-width="1.2" fill="none" /></svg>
<svg style="position:absolute;left:59.4px;top:146.4px;overflow:visible" width="17.2" height="17.2" viewBox="-10.0 -10.0 20 20"><path d="M-6 -4 h11 v10 h-11 z" fill="#dedede" /><path d="M-6 -4 h11 v10 h-11 z M-4 -1 h7 M-4 1.5 h7 M-4 4 h7" stroke="#c8c8c8" stroke-width="1" fill="none" /><path d="M0 0 L6 -7.5" stroke="#c8c8c8" stroke-width="2.2" fill="none" /></svg>
<svg style="position:absolute;left:81.4px;top:146.4px;overflow:visible" width="17.2" height="17.2" viewBox="-10.0 -10.0 20 20"><path d="M-6 -7.5 h5 l3 3 v7 h-8 z" fill="#dedede" /><path d="M-6 -7.5 h5 l3 3 v7 h-8 z" stroke="#c8c8c8" stroke-width="1.1" fill="none" /><path d="M-1 -2 h5 l3 3 v6.5 h-8 z" fill="#ececec" /><path d="M-1 -2 h5 l3 3 v6.5 h-8 z" stroke="#c8c8c8" stroke-width="1.1" fill="none" /><path d="M-4 -1 v6 l2 -2" stroke="#c8c8c8" stroke-width="1.2" fill="none" /></svg>
<svg style="position:absolute;left:102.4px;top:146.4px;overflow:visible" width="17.2" height="17.2" viewBox="-10.0 -10.0 20 20"><path d="M0 -7.5 h4 l3 3 v6 h-7 z" fill="#dedede" /><path d="M0 -7.5 h4 l3 3 v6 h-7 z" stroke="#c8c8c8" stroke-width="1.1" fill="none" /><circle cx="-1" cy="1" r="3.5" fill="#ececec" stroke="#c8c8c8" stroke-width="1.3"/><path d="M-7 4 h9 v3.5 h-9 z" fill="#c8c8c8" /></svg>
<svg style="position:absolute;left:124.9px;top:146.4px;overflow:visible" width="17.2" height="17.2" viewBox="-10.0 -10.0 20 20"><circle cx="1.5" cy="0.5" r="5.5" fill="#eaeaea" stroke="#c8c8c8" stroke-width="1.4"/><path d="M1.5 -3 v4 h3" stroke="#c8c8c8" stroke-width="1.2" fill="none" /><path d="M-7.5 -6.5 l6 0.5 l-4 4.5 z" fill="#c8c8c8" /></svg>
<svg style="position:absolute;left:152.4px;top:146.4px;overflow:visible" width="17.2" height="17.2" viewBox="-10.0 -10.0 20 20"><path d="M-6.5 -2 h11 v8 h-11 z" fill="#dedede" /><path d="M-6.5 -2 h11 v8 h-11 z M-6.5 1.5 h11" stroke="#c8c8c8" stroke-width="1.1" fill="none" /><path d="M-2 -7.5 h9.5 l-2.5 3 l2.5 3 h-9.5 z" fill="#c0c0c0" /></svg>
<svg style="position:absolute;left:175.9px;top:146.4px;overflow:visible" width="17.2" height="17.2" viewBox="-10.0 -10.0 20 20"><path d="M-6 -7.5 h9 l3 3 v11.5 h-12 z" fill="#f6f6f6" /><path d="M-6 -7.5 h9 l3 3 v11.5 h-12 z" stroke="#c4c4c4" stroke-width="1.1" fill="none" /><path d="M0.5 -4.5 v4 h-3 M-0.5 5 v-4 h3" stroke="#bcbcbc" stroke-width="1.3" fill="none" /><path d="M-7 8 h13" stroke="#bdbdbd" stroke-width="1" fill="none" /></svg>
<svg style="position:absolute;left:-3.0px;top:411.5px;overflow:visible" width="20.0" height="20.0" viewBox="-10.0 -10.0 20 20"><circle cx="-1.5" cy="-5.5" r="3" fill="#f0ee90" opacity="0.9"/><path d="M-3.5 -2.5 h6" stroke="#111" stroke-width="1.3" fill="none" /><path d="M-7 3.5 h13" stroke="#111" stroke-width="1.3" fill="none" /><path d="M-8.5 3.5 l3 -2.2 v4.4 z M7.5 3.5 l-3 -2.2 v4.4 z" fill="#111" /></svg>
<svg style="position:absolute;left:19.0px;top:411.5px;overflow:visible" width="20.0" height="20.0" viewBox="-10.0 -10.0 20 20"><circle cx="-1" cy="-5.5" r="3" fill="#f0ee90" opacity="0.9"/><path d="M-3.5 -2.5 h6 l2.5 3" stroke="#111" stroke-width="1.3" fill="none" /><path d="M-6 4 h11" stroke="#111" stroke-width="1.3" fill="none" /><path d="M7.5 4 l-3 -2.2 v4.4 z" fill="#111" /><path d="M-8 4 l2 -2 l2 2 l-2 2 z" fill="#fff" stroke="#111" stroke-width="0.9"/></svg>
<svg style="position:absolute;left:40.0px;top:411.5px;overflow:visible" width="20.0" height="20.0" viewBox="-10.0 -10.0 20 20"><circle cx="2.5" cy="-5" r="3" fill="#f0ee90" opacity="0.9"/><path d="M-7 -2.5 h8 v8 h-8 z M-7 1 h4 v4.5" stroke="#111" stroke-width="1.3" fill="none" /><path d="M2.5 -1 h5.5 v-5" stroke="#111" stroke-width="1.3" fill="none" /></svg>
<svg style="position:absolute;left:62.0px;top:411.5px;overflow:visible" width="20.0" height="20.0" viewBox="-10.0 -10.0 20 20"><circle cx="2.5" cy="-5" r="3" fill="#f0ee90" opacity="0.9"/><path d="M-7 -2.5 h4.5 v8 h-4.5 z M-2.5 0 h6.5 v5.5 h-6.5" stroke="#111" stroke-width="1.3" fill="none" /><path d="M3 -1 h5.5 v-5" stroke="#111" stroke-width="1.3" fill="none" /></svg>
<svg style="position:absolute;left:83.5px;top:411.5px;overflow:visible" width="20.0" height="20.0" viewBox="-10.0 -10.0 20 20"><circle cx="2.5" cy="-5" r="3" fill="#f0ee90" opacity="0.9"/><ellipse cx="-1.5" cy="2.5" rx="6" ry="3.3" fill="none" stroke="#111" stroke-width="1.3"/><path d="M3.5 -0.5 h4.5 v-5" stroke="#111" stroke-width="1.3" fill="none" /></svg>
<svg style="position:absolute;left:5.0px;top:434.5px;overflow:visible" width="20.0" height="20.0" viewBox="-10.0 -10.0 20 20"><path d="M-3 -7 h7 l3 3 v11 h-10 z" fill="#fff" /><path d="M-3 -7 h7 l3 3 v11 h-10 z" stroke="#111" stroke-width="1.1" fill="none" /><path d="M-9 -2 h5 v-3 l5.5 5 l-5.5 5 v-3 h-5 z" fill="#6a0a14" /></svg>
<svg style="position:absolute;left:26.0px;top:434.5px;overflow:visible" width="20.0" height="20.0" viewBox="-10.0 -10.0 20 20"><path d="M-7 -7 h4 l3 3 v7 h-7 z" fill="#e8f0f0" /><path d="M-7 -7 h4 l3 3 v7 h-7 z" stroke="#334" stroke-width="1.1" fill="none" /><path d="M-4.5 -4.5 h4.5 l3 3 v7.5 h-7.5 z" fill="#d8e8e8" /><path d="M-4.5 -4.5 h4.5 l3 3 v7.5 h-7.5 z" stroke="#223" stroke-width="1.1" fill="none" /><circle cx="1.5" cy="1.5" r="3.6" fill="#e0f4f4" stroke="#222" stroke-width="1.2"/><path d="M4 4.5 L7.5 8" stroke="#111" stroke-width="1.8" fill="none" /></svg>
<svg style="position:absolute;left:48.0px;top:434.5px;overflow:visible" width="20.0" height="20.0" viewBox="-10.0 -10.0 20 20"><path d="M-7.5 -7 h4 l3 3 v8.5 h-7 z" fill="#e8e8e8" /><path d="M-7.5 -7 h4 l3 3 v8.5 h-7 z" stroke="#223" stroke-width="1.1" fill="none" /><path d="M-2.5 -6.5 v9.5 M-2.5 -2 L4 -7.5 M-2.5 -2 L4.5 3.5" stroke="#d01828" stroke-width="1.5" fill="none" /><path d="M-4 6 h2 v2 h-2 z M-0.5 6 h2 v2 h-2 z M3 6 h2 v2 h-2 z" fill="#111" /></svg>
<svg style="position:absolute;left:69.5px;top:434.5px;overflow:visible" width="20.0" height="20.0" viewBox="-10.0 -10.0 20 20"><path d="M-8 -8 h3 l3 3 v6 h-6 z" fill="#e8e8e8" /><path d="M-8 -8 h3 l3 3 v6 h-6 z" stroke="#223" stroke-width="1.1" fill="none" /><path d="M-6 -5.5 h3 l3 3 v7 h-6 z" fill="#dcdcdc" /><path d="M-6 -5.5 h3 l3 3 v7 h-6 z" stroke="#223" stroke-width="1.1" fill="none" /><path d="M-4 4 v5" stroke="#111" stroke-width="1.2" fill="none" /><path d="M-4 -5 v8 M-3 -0.5 L6 -7 M-3 -0.5 L7 4.5" stroke="#d01828" stroke-width="1.5" fill="none" /></svg>
<svg style="position:absolute;left:1103.5px;top:139.0px;overflow:visible" width="20.0" height="20.0" viewBox="-10.0 -10.0 20 20"><path d="M-7 -7 h5.5 v5.5 h-5.5 z M-7 1.5 h5.5 v5.5 h-5.5 z M-4.25 -1.5 v3" stroke="#111" stroke-width="1.1" fill="none" /><path d="M-5.7 -4.25 h3 M-4.25 -5.7 v3 M-5.7 4.25 h3 M-4.25 2.8 v3" stroke="#111" stroke-width="1" fill="none" /><path d="M1 -6.5 h5.5 M1 -4 h5.5 M1 -1.5 h5.5 M1 1 h5.5 M1 3.5 h5.5 M1 6.5 h3 M5 6.5 h2" stroke="#222" stroke-width="1.2" fill="none" /></svg>
<span class="t" style="left:1129px;top:140.5px;font-size:9px;line-height:9px;font-weight:bold;color:#111;">A</span><span class="t" style="left:1129px;top:148.5px;font-size:9px;line-height:9px;font-weight:bold;color:#111;">Z</span>
<svg style="position:absolute;left:1128.5px;top:139.0px;overflow:visible" width="20.0" height="20.0" viewBox="-10.0 -10.0 20 20"><path d="M1.5 -7 v10" stroke="#10104a" stroke-width="1.3" fill="none" /><path d="M1.5 7 l-3 -4.5 h6 z" fill="#10104a" /></svg>
<svg style="position:absolute;left:1146.5px;top:139.0px;overflow:visible" width="20.0" height="20.0" viewBox="-10.0 -10.0 20 20"><path d="M-7.5 -4.5 h6 M-7.5 -0.5 h6 M-7.5 4 h6" stroke="#b81828" stroke-width="1.4" fill="none" /><path d="M-8.5 -4.5 l3 -2.3 v4.6 z M-0.5 -0.5 l-3 -2.3 v4.6 z M-8.5 4 l3 -2.3 v4.6 z" fill="#b81828" /><path d="M1.5 -6.5 h5.5 M1.5 -4 h5.5 M1.5 -1.5 h5.5 M1.5 1 h5.5 M1.5 3.5 h5.5 M1.5 6.5 h3 M5.5 6.5 h2" stroke="#222" stroke-width="1.2" fill="none" /></svg>
<span class="t" style="left:1178px;top:140px;font-size:9px;line-height:9px;font-weight:bold;color:#cc2050;transform:scaleX(0.62);">DYNA</span><span class="t" style="left:1179.5px;top:149px;font-size:9px;line-height:9px;font-weight:bold;color:#cc2050;transform:scaleX(0.72);">MIC</span>
<svg style="position:absolute;left:1198.0px;top:139.0px;overflow:visible" width="20.0" height="20.0" viewBox="-10.0 -10.0 20 20"><path d="M-7 -2.5 q0 -4 3 -3.5 q2 0.5 2.5 2.5 q0.5 -2 2.5 -2.5 q3 -0.5 3 3.5 M-7 -2.5 q0 2 2 3 q1.5 1 1 3 q0 2.5 2.5 2 h7" stroke="#111" stroke-width="1.2" fill="none" /><path d="M-1 4.5 L7 -6.5" stroke="#111" stroke-width="2" fill="none" /></svg>
<svg style="position:absolute;left:1226.5px;top:139.0px;overflow:visible" width="20.0" height="20.0" viewBox="-10.0 -10.0 20 20"><path d="M-7.5 -2 h11 v9.5 h-11 z" fill="#b01018" /><path d="M-7.5 -2 l4 -4.5 h7 l0 4.5 z" fill="#d82028" /><path d="M-7.5 -2 h11 v9.5 h-11 z" stroke="#600810" stroke-width="0.8" fill="none" /><path d="M1 -3 L6 -7" stroke="#111" stroke-width="1.6" fill="none" /><path d="M4 -8.5 h5.5 v5 z" fill="#111" /></svg>
<span class="t" style="left:345px;top:677px;font-size:13px;line-height:16px;font-weight:bold;color:#c4c4c4;">«</span>
<svg style="position:absolute;left:367.0px;top:675.5px;overflow:visible" width="20.0" height="20.0" viewBox="-10.0 -10.0 20 20"><circle cx="2.5" cy="-2" r="4.3" fill="#f8f8f8" stroke="#b4b4b4" stroke-width="1.2"/><path d="M-0.5 1.5 L-6.5 7" stroke="#b0b45a" stroke-width="1.8" fill="none" /></svg>
<svg style="position:absolute;left:955.5px;top:675.5px;overflow:visible" width="20.0" height="20.0" viewBox="-10.0 -10.0 20 20"><circle cx="-5.5" cy="-4.5" r="2.8" fill="#ece860"/><circle cx="0" cy="0" r="1.2" fill="#111"/><circle cx="3.5" cy="-3" r="1.2" fill="#111"/><circle cx="6.5" cy="0" r="1.2" fill="#111"/><circle cx="3.5" cy="3.5" r="1.2" fill="#111"/></svg>
<svg style="position:absolute;left:975.5px;top:675.5px;overflow:visible" width="20.0" height="20.0" viewBox="-10.0 -10.0 20 20"><circle cx="-4.5" cy="-4.5" r="2.8" fill="#ece860"/><circle cx="0" cy="0" r="1.2" fill="#111"/><circle cx="3.5" cy="-3" r="1.2" fill="#111"/><circle cx="6.5" cy="0" r="1.2" fill="#111"/><circle cx="3.5" cy="3.5" r="1.2" fill="#111"/><path d="M-6.5 -1.5 h4.5 v4.5 h-4.5 z M-4.5 1.5 h4.5 v4.5 h-4.5 z" stroke="#111" stroke-width="1.3" fill="none" /></svg>
<svg style="position:absolute;left:998.0px;top:675.5px;overflow:visible" width="20.0" height="20.0" viewBox="-10.0 -10.0 20 20"><circle cx="0" cy="0" r="1.2" fill="#111"/><circle cx="3.5" cy="-3" r="1.2" fill="#111"/><circle cx="6.5" cy="0" r="1.2" fill="#111"/><circle cx="3.5" cy="3.5" r="1.2" fill="#111"/><path d="M-7.5 -7 h6 v6 h-6 z" fill="#111" /><path d="M-6 -5.5 h3 v2 h-3 z" fill="#fff" /></svg>
<svg style="position:absolute;left:1019.5px;top:675.5px;overflow:visible" width="20.0" height="20.0" viewBox="-10.0 -10.0 20 20"><circle cx="0" cy="0" r="1.2" fill="#111"/><circle cx="3.5" cy="-3" r="1.2" fill="#111"/><circle cx="6.5" cy="0" r="1.2" fill="#111"/><circle cx="3.5" cy="3.5" r="1.2" fill="#111"/><path d="M-7.5 -7 l5 5 M-2.5 -7 l-5 5" stroke="#6a0a14" stroke-width="1.6" fill="none" /></svg>
<svg style="position:absolute;left:1064.0px;top:675.5px;overflow:visible" width="20.0" height="20.0" viewBox="-10.0 -10.0 20 20"><rect x="-8.5" y="-7" width="9" height="6" rx="1.5" fill="#fbfbfb" stroke="#99a" stroke-width="1"/><path d="M-6 -4 h4" stroke="#99a" stroke-width="1" fill="none" stroke-dasharray="1 1"/><circle cx="2.5" cy="2" r="4" fill="#e01018"/></svg>
<svg style="position:absolute;left:1085.0px;top:675.5px;overflow:visible" width="20.0" height="20.0" viewBox="-10.0 -10.0 20 20"><rect x="-8.5" y="-7" width="9" height="6" rx="1.5" fill="#fbfbfb" stroke="#c4c4c4" stroke-width="1"/><path d="M-6 -4 h4" stroke="#c4c4c4" stroke-width="1" fill="none" stroke-dasharray="1 1"/><path d="M-0.5 -1 h6.5 v6.5 h-6.5 z" fill="#8e8e8e" /></svg>
<svg style="position:absolute;left:1114.5px;top:675.5px;overflow:visible" width="20.0" height="20.0" viewBox="-10.0 -10.0 20 20"><rect x="-8.5" y="-7" width="9" height="6" rx="1.5" fill="#fbfbfb" stroke="#99a" stroke-width="1"/><path d="M-6 -4 h4" stroke="#99a" stroke-width="1" fill="none" stroke-dasharray="1 1"/><path d="M-1.5 -2.5 l8 4.5 l-8 4.5 z" fill="#1a7a1a" /></svg>
</div></body></html>
